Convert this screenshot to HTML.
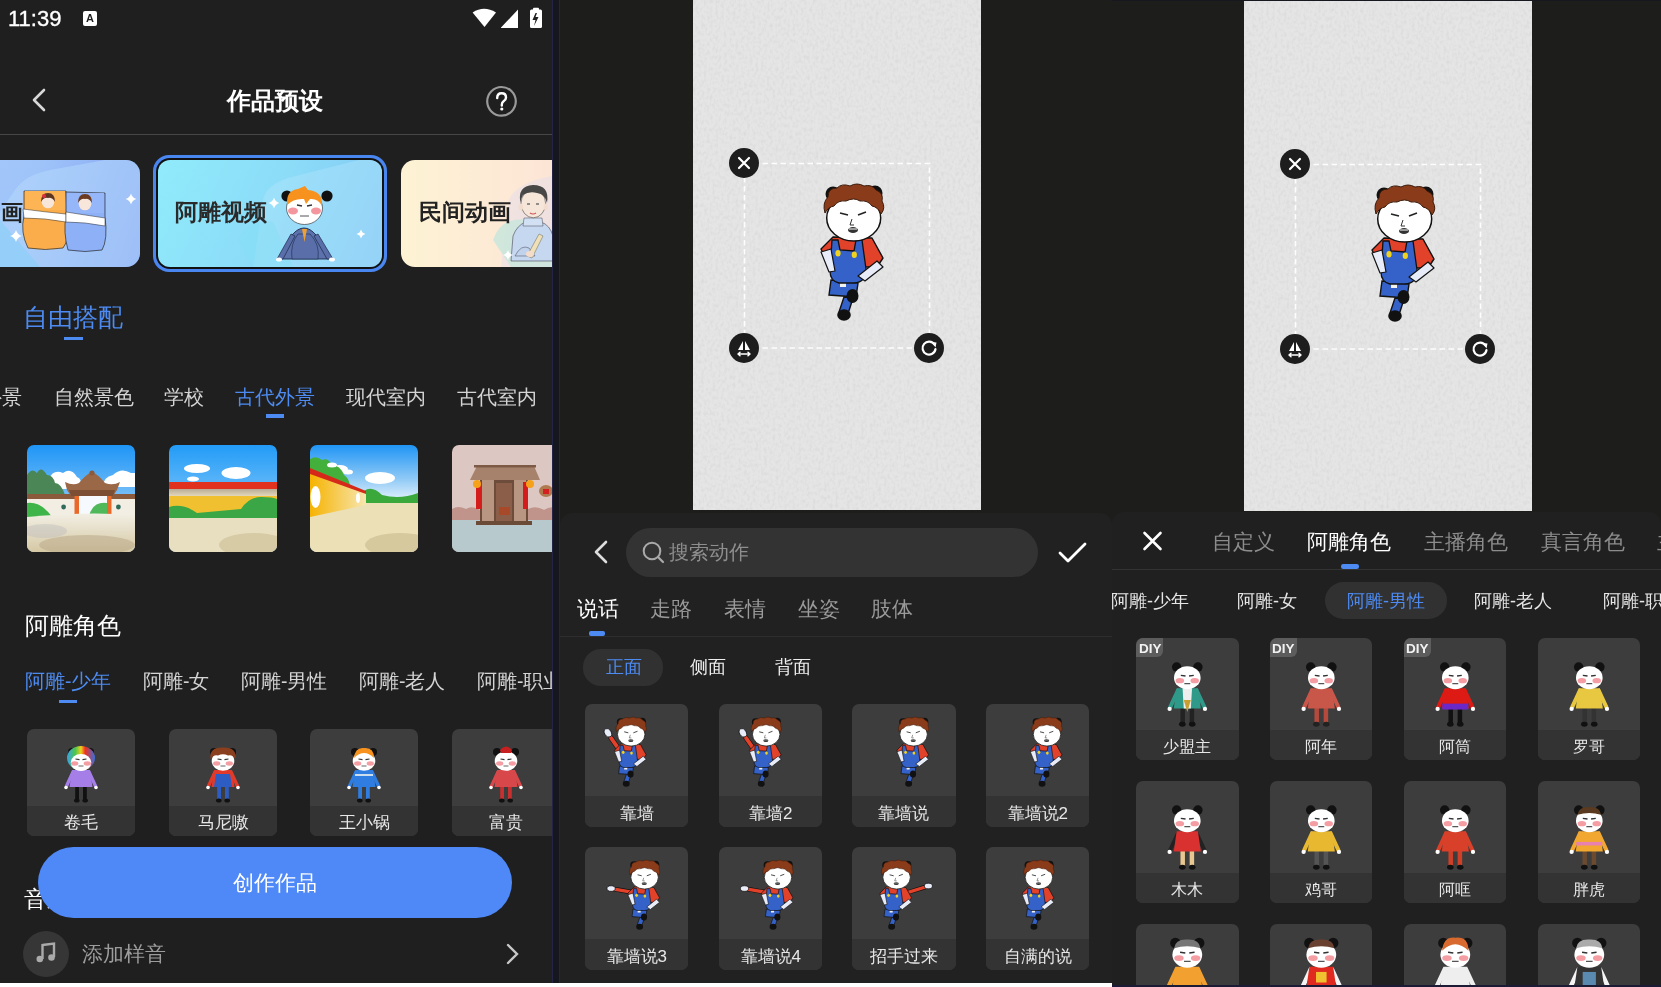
<!DOCTYPE html>
<html><head><meta charset="utf-8">
<style>
*{margin:0;padding:0;box-sizing:border-box}
html,body{width:1661px;height:987px;overflow:hidden;background:#ffffff;font-family:"Liberation Sans",sans-serif}
.a{position:absolute}
.t{position:absolute;white-space:nowrap;line-height:1;will-change:transform}
.pn{position:absolute;top:0;overflow:hidden}
svg{position:absolute;overflow:visible}
</style></head><body>

<div class="pn" style="left:0;width:552px;height:983px;background:#1f1f1f"><div class="t" style="left:8px;top:8px;font-size:22px;color:#fff;font-weight:normal;-webkit-text-stroke:0.35px #fff">11:39</div>
<div class="a" style="left:83px;top:11px;width:14px;height:15px;background:#fff;border-radius:2px;"></div>
<div class="t" style="left:85.5px;top:13px;font-size:11px;color:#1f1f1f;font-weight:bold;">A</div>
<svg style="left:470px;top:6px" width="76" height="24" viewBox="0 0 76 24">
<path d="M2.6 6.5 Q14 -1 26 6.5 L14.5 21 Z" fill="#fff"/>
<path d="M31 21.5 L48 3.6 L48 22 L31 22 Z" fill="#fff"/>
<rect x="60" y="3.5" width="12" height="18.5" rx="1.5" fill="#fff"/>
<rect x="63" y="1.8" width="6" height="3" rx="1" fill="#fff"/>
<path d="M65.5 7 L62.5 14 L65.5 14 L64 20 L68.5 11 L65.5 11 L67 7 Z" fill="#1f1f1f"/>
</svg>
<svg style="left:30px;top:87px" width="18" height="26" viewBox="0 0 18 26"><path d="M14 3 L4 13 L14 23" stroke="#d8d8d8" stroke-width="2.6" fill="none" stroke-linecap="round" stroke-linejoin="round"/></svg>
<div class="t" style="left:227px;top:89px;font-size:24.2px;color:#fff;font-weight:bold;">作品预设</div>
<svg style="left:484px;top:84px" width="35" height="35" viewBox="0 0 35 35"><circle cx="17.5" cy="17.3" r="14.3" stroke="#9a9a9a" stroke-width="2.2" fill="none"/><path d="M13.2 14 Q13.2 9.3 17.6 9.3 Q22 9.3 22 13.4 Q22 15.8 19.6 17.3 Q17.8 18.6 17.8 20.8 L17.8 21.6" stroke="#fff" stroke-width="2.4" fill="none" stroke-linecap="round"/><circle cx="17.8" cy="25" r="1.6" fill="#fff"/></svg>
<div class="a" style="left:0px;top:134px;width:552px;height:1px;background:#464646;border-radius:0px;"></div>
<div class="a" style="left:-100px;top:160px;width:240px;height:107px;border-radius:14px;background:linear-gradient(110deg,#a9cafb 0%,#9fc4f9 50%,#819ff2 100%);overflow:hidden">
<svg style="left:0;top:0" width="240" height="107" viewBox="0 0 240 107">
<path d="M60 110 L115 30 Q125 15 150 10 L260 -10 L260 110 Z" fill="#b4d8fc" opacity="0.55"/>
<path d="M40 70 Q60 45 100 60 L140 107 L60 107 Z" fill="#7fd0f8" opacity="0.5"/>
<path d="M124 31 L166 31 L167 56 Q170 80 163 88 Q145 91 128 88 Q120 72 124 56 Z" fill="#fbad4c" stroke="#2a2a2a" stroke-width="0.7"/>
<path d="M166 32 L205 33 L205 56 Q208 80 202 90 Q185 93 168 90 Q163 72 166 56 Z" fill="#8db0f7" stroke="#2a2a2a" stroke-width="0.7"/>
<path d="M125 31 L165 31 L165 50 L125 50 Z" fill="#fcb455"/><path d="M167 33 L204 33 L204 53 L167 53 Z" fill="#95b6f8"/>
<circle cx="148" cy="42" r="6.3" fill="#f8e6da"/><path d="M141 42 Q141 33 148 33 Q155 33 155 42 Q152 37 148 38 Q144 37 141 42 Z" fill="#5e3520"/><circle cx="144" cy="36" r="2" fill="#e03040"/>
<circle cx="185" cy="44" r="6.3" fill="#f8e6da"/><path d="M178 43 Q178 34 185 34 Q192 34 192 43 Q189 38 185 39 Q181 38 178 43 Z" fill="#6b3a1f"/>
<path d="M123 49 Q145 52 166 54 L166 62 Q145 58 124 58 Z" fill="#fff" stroke="#2a2a2a" stroke-width="0.5"/>
<path d="M166 52 Q185 55 205 58 L205 66 Q185 62 166 62 Z" fill="#fff" stroke="#2a2a2a" stroke-width="0.5"/>
<path d="M231 33.5 Q232.21 37.79 236.5 39 Q232.21 40.21 231 44.5 Q229.79 40.21 225.5 39 Q229.79 37.79 231 33.5 Z" fill="#fff"/>
<path d="M116 70 Q117.32 74.68 122 76 Q117.32 77.32 116 82 Q114.68 77.32 110 76 Q114.68 74.68 116 70 Z" fill="#fff"/>
</svg>
<div class="t" style="left:100px;top:42px;font-size:22px;color:#222;font-weight:bold;letter-spacing:0.5px;left:78px">动画</div>
</div>
<div class="a" style="left:153px;top:155px;width:234px;height:117px;background:#4a86f0;border-radius:16px;"></div>
<div class="a" style="left:156px;top:158px;width:228px;height:111px;background:#111;border-radius:14px;"></div>
<div class="a" style="left:158px;top:160px;width:224px;height:107px;border-radius:12px;background:linear-gradient(115deg,#90ebfb 0%,#8cdcf8 50%,#7fc3f4 100%);overflow:hidden">
<svg style="left:0;top:0" width="224" height="107" viewBox="0 0 224 107">
<path d="M95 110 L105 40 Q108 25 130 18 L240 -10 L240 110 Z" fill="#b0e4fb" opacity="0.45"/>
<path d="M80 80 Q90 60 115 62 L135 107 L95 107 Z" fill="#86e0f6" opacity="0.5"/>
<path d="M122 99 L134 75 Q140 68 146 68 Q152 68 158 75 L172 99 Z" fill="#5d72ad" stroke="#1d2a4a" stroke-width="0.9"/>
<path d="M134 99 Q132 84 140 74 L152 74 Q162 84 160 99 Z" fill="#5a6fa9" stroke="#1d2a4a" stroke-width="0.6"/>
<path d="M119 99 L133 74 L137 76 L125 99 Z" fill="#5a6fa9" stroke="#1d2a4a" stroke-width="0.7"/><path d="M175 99 L160 74 L156 76 L169 99 Z" fill="#5a6fa9" stroke="#1d2a4a" stroke-width="0.7"/>
<path d="M144 69 L146.5 82 L149 69 Z" fill="#f0a030"/>
<ellipse cx="121" cy="99.5" rx="3" ry="2" fill="#fff"/><ellipse cx="174" cy="99.5" rx="3" ry="2" fill="#fff"/>
<circle cx="129" cy="36" r="5.6" fill="#111"/><circle cx="169" cy="36" r="5.6" fill="#111"/>
<ellipse cx="146.5" cy="48" rx="18" ry="16.5" fill="#fff" stroke="#222" stroke-width="0.6"/>
<path d="M129 45 Q128 30 140 29 L147 26 L150 30 Q165 31 164 46 Q160 38 152 39 L148 44 L146 39 Q136 38 129 45 Z" fill="#f7921e"/>
<ellipse cx="135" cy="51" rx="5" ry="3.4" fill="#f07c84" opacity="0.8"/><ellipse cx="158" cy="51" rx="5" ry="3.4" fill="#f07c84" opacity="0.8"/>
<path d="M139 45 L144 46 M149 46 L154 45" stroke="#333" stroke-width="1.4"/><path d="M142 56 L151 56" stroke="#555" stroke-width="1"/>
<path d="M116 37.5 Q117.21 41.79 121.5 43 Q117.21 44.21 116 48.5 Q114.79 44.21 110.5 43 Q114.79 41.79 116 37.5 Z" fill="#fff"/>
<path d="M203 69.5 Q203.99 73.01 207.5 74 Q203.99 74.99 203 78.5 Q202.01 74.99 198.5 74 Q202.01 73.01 203 69.5 Z" fill="#fff"/>
</svg>
<div class="t" style="left:16.5px;top:42px;font-size:22.5px;color:#2a2a2a;font-weight:bold;">阿雕视频</div>
</div>
<div class="a" style="left:401px;top:160px;width:250px;height:107px;border-radius:14px;background:linear-gradient(90deg,#fdf3d4 0%,#fde6d6 55%,#fadbd6 100%);overflow:hidden">
<svg style="left:0;top:0" width="250" height="107" viewBox="0 0 250 107">
<path d="M100 107 L108 40 Q112 28 135 20 L250 -10 L250 107 Z" fill="#e9dfe4" opacity="0.7"/>
<path d="M92 80 Q100 55 130 60 L160 107 L110 107 Z" fill="#c7e6dc" opacity="0.8"/>
<path d="M110 101 L112 76 Q116 65 125 62 L140 62 Q149 65 152 76 L156 101 Z" fill="#c6d7f0" stroke="#445" stroke-width="0.6"/>
<path d="M123 58 L141 58 L142 66 L122 66 Z" fill="#d2e0f4" stroke="#445" stroke-width="0.5"/>
<path d="M114 96 Q120 84 128 88 L134 96 Z" fill="#c0d2ec" stroke="#445" stroke-width="0.5"/>
<path d="M126 96 L138 74 L142 76 L131 98 Z" fill="#efe0b8" stroke="#665" stroke-width="0.5"/>
<ellipse cx="129" cy="94" rx="4" ry="3" fill="#f4dccb"/>
<ellipse cx="132.3" cy="43.5" rx="12.3" ry="14.3" fill="#f6e6da" stroke="#444" stroke-width="0.6"/>
<ellipse cx="119.8" cy="47" rx="2.2" ry="3.2" fill="#f2dccd"/><ellipse cx="144.8" cy="47" rx="2.2" ry="3.2" fill="#f2dccd"/>
<path d="M119.5 43 Q116 26 132 25 Q149 25 146 43 Q144 34 136 33 Q128 31 122 35 Q120 38 119.5 43 Z" fill="#474747"/>
<path d="M126 44 L129 44 M135 44 L138 44" stroke="#333" stroke-width="1"/><path d="M129 53 Q132 55 135 53" stroke="#c55" stroke-width="1.2" fill="none"/>
<path d="M107 90 Q108.1 93.9 112 95 Q108.1 96.1 107 100 Q105.9 96.1 102 95 Q105.9 93.9 107 90 Z" fill="#fff"/>
</svg>
<div class="t" style="left:17.5px;top:42px;font-size:22.5px;color:#222;font-weight:bold;">民间动画</div>
</div>
<div class="t" style="left:23px;top:306px;font-size:24.5px;color:#4d8bf2;font-weight:normal;">自由搭配</div>
<div class="a" style="left:64px;top:337px;width:19px;height:3px;background:#4d8bf2;border-radius:0px;"></div>
<div class="t" style="left:-18px;top:388px;font-size:19.6px;color:#d4d4d4;font-weight:normal;">外景</div>
<div class="t" style="left:53.5px;top:388px;font-size:19.6px;color:#d4d4d4;font-weight:normal;">自然景色</div>
<div class="t" style="left:164px;top:388px;font-size:19.6px;color:#d4d4d4;font-weight:normal;">学校</div>
<div class="t" style="left:235px;top:388px;font-size:19.6px;color:#4d8bf2;font-weight:normal;">古代外景</div>
<div class="t" style="left:345.5px;top:388px;font-size:19.6px;color:#d4d4d4;font-weight:normal;">现代室内</div>
<div class="t" style="left:457px;top:388px;font-size:19.6px;color:#d4d4d4;font-weight:normal;">古代室内</div>
<div class="a" style="left:266px;top:414px;width:18px;height:4px;background:#4d8bf2;border-radius:0px;"></div>
<div class="a" style="left:27px;top:445px;width:108px;height:107px;border-radius:7px;overflow:hidden"><svg style="left:0;top:0" width="108" height="107" viewBox="0 0 108 107"><defs><linearGradient id="sky1" x1="0" y1="0" x2="0" y2="1"><stop offset="0" stop-color="#1e95f6"/><stop offset="0.6" stop-color="#8cc8f8"/><stop offset="1" stop-color="#e2f1fc"/></linearGradient><linearGradient id="gr1" x1="0" y1="0" x2="0" y2="1"><stop offset="0" stop-color="#f2efe4"/><stop offset="1" stop-color="#d5c8a4"/></linearGradient></defs><rect width="108" height="107" fill="url(#sky1)"/><path d="M12 44 Q12 34 22 34 Q26 24 36 28 Q44 22 50 32 Q56 34 53 44 Z" fill="#fff"/><path d="M76 42 Q76 32 86 30 Q94 22 104 28 L108 28 L108 42 Z" fill="#fff"/><path d="M0 30 Q5 22 10 28 Q14 20 20 30 Q26 30 28 38 Q34 38 38 50 L0 50 Z" fill="#4a8656"/><rect x="0" y="49" width="108" height="5" fill="#8b5a3c"/><path d="M0 54 L108 54 L108 72 Q60 66 0 74 Z" fill="#f2eee4"/><circle cx="36.6" cy="62" r="2.4" fill="#2f6a5a"/><circle cx="91.4" cy="62" r="2.4" fill="#2f6a5a"/><path d="M38 37 Q46 41 52 38 Q58 30 65 27 Q72 30 78 38 Q86 41 93 37 L90 45 L86 51 L44 51 L40 45 Z" fill="#9a6846"/><circle cx="65" cy="28" r="2.6" fill="#8b5a3c"/><path d="M42 45 L88 45 L86 51 L44 51 Z" fill="#7c4f34"/><rect x="52" y="51" width="28" height="20" fill="#f6faff"/><rect x="47.5" y="51" width="4.5" height="20" fill="#e8692a"/><rect x="80" y="51" width="4.5" height="20" fill="#e8692a"/><path d="M62 71 Q66 56 80 58 L80 71 Z" fill="#4fb85a"/><path d="M0 58 Q14 56 26 73 L0 75 Z" fill="#3fb448"/><path d="M0 72 Q60 66 108 70 L108 107 L0 107 Z" fill="url(#gr1)"/><ellipse cx="60" cy="100" rx="48" ry="10" fill="#b9a988" opacity="0.55"/><ellipse cx="18" cy="86" rx="22" ry="7" fill="#bdbdbd" opacity="0.45"/></svg></div>
<div class="a" style="left:169px;top:445px;width:108px;height:107px;border-radius:7px;overflow:hidden"><svg style="left:0;top:0" width="108" height="107" viewBox="0 0 108 107"><defs><linearGradient id="sky2" x1="0" y1="0" x2="0" y2="1"><stop offset="0" stop-color="#229bf7"/><stop offset="1" stop-color="#bfe3fb"/></linearGradient><linearGradient id="wb2" x1="0" y1="0" x2="0" y2="1"><stop offset="0" stop-color="#b8ad96"/><stop offset="1" stop-color="#e8dcc0"/></linearGradient></defs><rect width="108" height="107" fill="url(#sky2)"/><ellipse cx="28" cy="23.5" rx="13" ry="4.5" fill="#fff"/><ellipse cx="67" cy="28" rx="14.5" ry="6" fill="#fff"/><ellipse cx="24" cy="34" rx="6" ry="2.6" fill="#fff"/><rect x="0" y="37" width="108" height="7" fill="#e0321e"/><rect x="0" y="44" width="108" height="8" fill="url(#wb2)"/><rect x="0" y="51" width="108" height="22" fill="#f0c030"/><path d="M0 62 Q14 58 28 68 Q50 66 72 64 Q80 52 92 52 Q104 52 108 54 L108 74 L0 74 Z" fill="#3aa646"/><rect x="0" y="73" width="108" height="34" fill="#e8dfc0"/><ellipse cx="85" cy="100" rx="35" ry="12" fill="#c9b98e" opacity="0.55"/></svg></div>
<div class="a" style="left:310px;top:445px;width:108px;height:107px;border-radius:7px;overflow:hidden"><svg style="left:0;top:0" width="108" height="107" viewBox="0 0 108 107"><defs><linearGradient id="sky3" x1="0" y1="0" x2="0" y2="60" gradientUnits="userSpaceOnUse"><stop offset="0" stop-color="#1f95f5"/><stop offset="0.55" stop-color="#8cc8f6"/><stop offset="1" stop-color="#f4fafd"/></linearGradient><linearGradient id="wl3" x1="0" y1="0" x2="1" y2="0"><stop offset="0" stop-color="#f6b300"/><stop offset="1" stop-color="#f7e6b0"/></linearGradient></defs><rect width="108" height="107" fill="url(#sky3)"/><ellipse cx="70" cy="33" rx="15" ry="6" fill="#fff"/><ellipse cx="30" cy="24" rx="8" ry="4" fill="#fff"/><path d="M0 14 Q6 10 12 15 Q18 12 22 20 Q30 20 34 30 Q38 32 40 40 L0 30 Z" fill="#44b03c"/><ellipse cx="22" cy="20" rx="5" ry="2.5" fill="#fff"/><ellipse cx="38" cy="27" rx="5" ry="2.5" fill="#fff"/><path d="M54 46 Q62 40 72 50 Q90 55 108 48 L108 62 L54 62 Z" fill="#3aa83a"/><rect x="0" y="58" width="108" height="49" fill="#ebe0b6"/><path d="M0 27 L56 47 L56 60 L0 72 Z" fill="url(#wl3)"/><path d="M0 23 L56 46 L56 49 L0 29 Z" fill="#d52a1a"/><ellipse cx="5.5" cy="52" rx="5" ry="11" fill="#fff"/><ellipse cx="48" cy="53" rx="2" ry="5" fill="#fff"/><ellipse cx="90" cy="100" rx="35" ry="12" fill="#c9b98e" opacity="0.6"/></svg></div>
<div class="a" style="left:452px;top:445px;width:108px;height:107px;border-radius:7px;overflow:hidden"><svg style="left:0;top:0" width="108" height="107" viewBox="0 0 108 107"><rect width="108" height="107" fill="#dcc7c3"/><path d="M0 64 Q6 60 14 64 Q20 60 28 65 L28 76 L0 76 Z" fill="#b07a6c" opacity="0.65"/><path d="M76 64 Q84 60 92 65 Q100 60 108 64 L108 76 L76 76 Z" fill="#b07a6c" opacity="0.65"/><rect x="0" y="75" width="108" height="32" fill="#b8c9cd"/><rect x="28" y="32" width="48" height="44" fill="#6e4c3c"/><rect x="44" y="38" width="16" height="38" fill="#8a5e48"/><rect x="30" y="35" width="12" height="41" fill="#b89682"/><rect x="62" y="35" width="12" height="41" fill="#b89682"/><path d="M47 62 L58 62 L58 70 L47 70 Z" fill="#a84a2a"/><path d="M18 35 L25 21 L82 21 L88 35 Z" fill="#a6826c"/><rect x="22" y="20" width="62" height="2.5" fill="#7d5a45"/><rect x="24" y="37" width="5" height="27" fill="#d41c1c"/><rect x="71" y="37" width="5" height="27" fill="#d41c1c"/><circle cx="25" cy="39" r="4" fill="#f5a11a"/><circle cx="78" cy="39" r="4" fill="#f5a11a"/><ellipse cx="94" cy="46" rx="7" ry="6" fill="#b07a50"/><rect x="91" y="44" width="6" height="5" fill="#d42020"/><rect x="24" y="76" width="56" height="4" fill="#6b4a38"/></svg></div>
<div class="t" style="left:25px;top:614px;font-size:24px;color:#fff;font-weight:normal;">阿雕角色</div>
<div class="t" style="left:25px;top:672px;font-size:19.5px;color:#4d8bf2;font-weight:normal;">阿雕-少年</div>
<div class="t" style="left:143px;top:672px;font-size:19.5px;color:#d4d4d4;font-weight:normal;">阿雕-女</div>
<div class="t" style="left:241px;top:672px;font-size:19.5px;color:#d4d4d4;font-weight:normal;">阿雕-男性</div>
<div class="t" style="left:359px;top:672px;font-size:19.5px;color:#d4d4d4;font-weight:normal;">阿雕-老人</div>
<div class="t" style="left:477px;top:672px;font-size:19.5px;color:#d4d4d4;font-weight:normal;">阿雕-职业</div>
<div class="a" style="left:59px;top:699.5px;width:18px;height:3.5px;background:#4d8bf2;border-radius:0px;"></div>
<div class="a" style="left:27px;top:729px;width:108px;height:107px;border-radius:7px;background:#3d3d3d;overflow:hidden"><div class="a" style="left:0;top:77px;width:108px;height:30px;background:#333"></div><svg style="left:0;top:0" width="108" height="107" viewBox="0 0 108 107"><defs><linearGradient id="rainbow" x1="0" y1="0" x2="1" y2="0"><stop offset="0" stop-color="#3aa0e8"/><stop offset="0.3" stop-color="#4cc84a"/><stop offset="0.5" stop-color="#f0d020"/><stop offset="0.65" stop-color="#f03020"/><stop offset="1" stop-color="#3a70e0"/></linearGradient></defs><g transform="translate(54.00,17.00) scale(1)"><rect x="-5.8" y="39" width="3.8" height="15" fill="#111"/><rect x="2" y="39" width="3.8" height="15" fill="#111"/><ellipse cx="-4.2" cy="54.5" rx="2.8" ry="2.1" fill="#111"/><ellipse cx="4.2" cy="54.5" rx="2.8" ry="2.1" fill="#111"/><path d="M-8 26 L-14.5 40" stroke="#a57ee8" stroke-width="3.4" stroke-linecap="round"/><path d="M8 26 L14.5 40" stroke="#a57ee8" stroke-width="3.4" stroke-linecap="round"/><circle cx="-15" cy="41.5" r="1.8" fill="#fff"/><circle cx="15" cy="41.5" r="1.8" fill="#fff"/><path d="M-9 24 L9 24 L11.5 41 L-11.5 41 Z" fill="#a57ee8"/><circle cx="-9" cy="6" r="4" fill="#111"/><circle cx="9" cy="6" r="4" fill="#111"/><ellipse cx="0" cy="15" rx="11.3" ry="9.8" fill="#fff"/><ellipse cx="0" cy="12" rx="14" ry="12" fill="url(#rainbow)"/><ellipse cx="0" cy="16.5" rx="10.3" ry="8.5" fill="#fff"/><ellipse cx="-6.3" cy="17.5" rx="3.6" ry="2.2" fill="#f07c84" opacity="0.75"/><ellipse cx="6.3" cy="17.5" rx="3.6" ry="2.2" fill="#f07c84" opacity="0.75"/><path d="M-5.5 13 L-1.5 13.6 M1.5 13.6 L5.5 13" stroke="#333" stroke-width="1.2"/><path d="M-2.5 20 L2.5 20" stroke="#555" stroke-width="0.9"/></g></svg><div class="t" style="left:0;width:108px;text-align:center;top:84.5px;font-size:17px;color:#e8e8e8">卷毛</div></div>
<div class="a" style="left:169px;top:729px;width:108px;height:107px;border-radius:7px;background:#3d3d3d;overflow:hidden"><div class="a" style="left:0;top:77px;width:108px;height:30px;background:#333"></div><svg style="left:0;top:0" width="108" height="107" viewBox="0 0 108 107"><g transform="translate(54.00,17.00) scale(1)"><rect x="-5.8" y="39" width="3.8" height="15" fill="#2d5cc2"/><rect x="2" y="39" width="3.8" height="15" fill="#2d5cc2"/><ellipse cx="-4.2" cy="54.5" rx="2.8" ry="2.1" fill="#111"/><ellipse cx="4.2" cy="54.5" rx="2.8" ry="2.1" fill="#111"/><path d="M-8 26 L-14.5 40" stroke="#e23a2a" stroke-width="3.4" stroke-linecap="round"/><path d="M8 26 L14.5 40" stroke="#e23a2a" stroke-width="3.4" stroke-linecap="round"/><circle cx="-15" cy="41.5" r="1.8" fill="#fff"/><circle cx="15" cy="41.5" r="1.8" fill="#fff"/><path d="M-9 24 L9 24 L11.5 41 L-11.5 41 Z" fill="#e23a2a"/><path d="M-7 28 L7 28 L9 41 L-9 41 Z" fill="#2d5cc2"/><circle cx="-9" cy="6" r="4" fill="#111"/><circle cx="9" cy="6" r="4" fill="#111"/><ellipse cx="0" cy="15" rx="11.3" ry="9.8" fill="#fff"/><path d="M-12.5 13 Q-14 1 0 1.5 Q14 1 12.5 13 Q9 8 5 9.5 Q0 7 -5 9.5 Q-9 8 -12.5 13 Z" fill="#8a3f1e"/><ellipse cx="-6.3" cy="17.5" rx="3.6" ry="2.2" fill="#f07c84" opacity="0.75"/><ellipse cx="6.3" cy="17.5" rx="3.6" ry="2.2" fill="#f07c84" opacity="0.75"/><path d="M-5.5 13 L-1.5 13.6 M1.5 13.6 L5.5 13" stroke="#333" stroke-width="1.2"/><path d="M-2.5 20 L2.5 20" stroke="#555" stroke-width="0.9"/></g></svg><div class="t" style="left:0;width:108px;text-align:center;top:84.5px;font-size:17px;color:#e8e8e8">马尼嗷</div></div>
<div class="a" style="left:310px;top:729px;width:108px;height:107px;border-radius:7px;background:#3d3d3d;overflow:hidden"><div class="a" style="left:0;top:77px;width:108px;height:30px;background:#333"></div><svg style="left:0;top:0" width="108" height="107" viewBox="0 0 108 107"><g transform="translate(54.00,17.00) scale(1)"><rect x="-5.8" y="39" width="3.8" height="15" fill="#2f7de0"/><rect x="2" y="39" width="3.8" height="15" fill="#2f7de0"/><ellipse cx="-4.2" cy="54.5" rx="2.8" ry="2.1" fill="#111"/><ellipse cx="4.2" cy="54.5" rx="2.8" ry="2.1" fill="#111"/><path d="M-8 26 L-14.5 40" stroke="#2f7de0" stroke-width="3.4" stroke-linecap="round"/><path d="M8 26 L14.5 40" stroke="#2f7de0" stroke-width="3.4" stroke-linecap="round"/><circle cx="-15" cy="41.5" r="1.8" fill="#fff"/><circle cx="15" cy="41.5" r="1.8" fill="#fff"/><path d="M-9 24 L9 24 L11.5 41 L-11.5 41 Z" fill="#2f7de0"/><rect x="-9" y="28" width="18" height="2" fill="#cde"/><circle cx="-9" cy="6" r="4" fill="#111"/><circle cx="9" cy="6" r="4" fill="#111"/><ellipse cx="0" cy="15" rx="11.3" ry="9.8" fill="#fff"/><path d="M-10 12 Q-9 1 0 2 Q10 1 10 12 Q5 7 0 7 Q-5 7 -10 12 Z" fill="#f7921e"/><ellipse cx="-6.3" cy="17.5" rx="3.6" ry="2.2" fill="#f07c84" opacity="0.75"/><ellipse cx="6.3" cy="17.5" rx="3.6" ry="2.2" fill="#f07c84" opacity="0.75"/><path d="M-5.5 13 L-1.5 13.6 M1.5 13.6 L5.5 13" stroke="#333" stroke-width="1.2"/><path d="M-2.5 20 L2.5 20" stroke="#555" stroke-width="0.9"/></g></svg><div class="t" style="left:0;width:108px;text-align:center;top:84.5px;font-size:17px;color:#e8e8e8">王小锅</div></div>
<div class="a" style="left:452px;top:729px;width:108px;height:107px;border-radius:7px;background:#3d3d3d;overflow:hidden"><div class="a" style="left:0;top:77px;width:108px;height:30px;background:#333"></div><svg style="left:0;top:0" width="108" height="107" viewBox="0 0 108 107"><g transform="translate(54.00,17.00) scale(1)"><rect x="-5.8" y="39" width="3.8" height="15" fill="#c83030"/><rect x="2" y="39" width="3.8" height="15" fill="#c83030"/><ellipse cx="-4.2" cy="54.5" rx="2.8" ry="2.1" fill="#111"/><ellipse cx="4.2" cy="54.5" rx="2.8" ry="2.1" fill="#111"/><path d="M-8 26 L-14.5 40" stroke="#d8484a" stroke-width="3.4" stroke-linecap="round"/><path d="M8 26 L14.5 40" stroke="#d8484a" stroke-width="3.4" stroke-linecap="round"/><circle cx="-15" cy="41.5" r="1.8" fill="#fff"/><circle cx="15" cy="41.5" r="1.8" fill="#fff"/><path d="M-9 24 L9 24 L11.5 41 L-11.5 41 Z" fill="#d8484a"/><circle cx="-9" cy="6" r="4" fill="#111"/><circle cx="9" cy="6" r="4" fill="#111"/><ellipse cx="0" cy="15" rx="11.3" ry="9.8" fill="#fff"/><path d="M-6 4 Q0 -3 6 4 L5 7 L-5 7 Z" fill="#c82020"/><ellipse cx="-6.3" cy="17.5" rx="3.6" ry="2.2" fill="#f07c84" opacity="0.75"/><ellipse cx="6.3" cy="17.5" rx="3.6" ry="2.2" fill="#f07c84" opacity="0.75"/><path d="M-5.5 13 L-1.5 13.6 M1.5 13.6 L5.5 13" stroke="#333" stroke-width="1.2"/><path d="M-2.5 20 L2.5 20" stroke="#555" stroke-width="0.9"/></g></svg><div class="t" style="left:0;width:108px;text-align:center;top:84.5px;font-size:17px;color:#e8e8e8">富贵</div></div>
<div class="t" style="left:24px;top:889px;font-size:22.5px;color:#fff;font-weight:500;">音乐</div>
<div class="a" style="left:38px;top:847px;width:474px;height:71px;background:#4f89f7;border-radius:36px;"></div>
<div class="t" style="left:232.5px;top:872px;font-size:21.2px;color:#fff;font-weight:normal;">创作作品</div>
<div class="a" style="left:23px;top:931px;width:46px;height:46px;background:#363636;border-radius:23px;"></div>
<svg style="left:23px;top:931px" width="46" height="46" viewBox="0 0 46 46"><path d="M19.5 14 L31 12.5 L31 26" stroke="#aaa" stroke-width="2.4" fill="none"/><rect x="18.3" y="13" width="2.4" height="15" fill="#aaa"/><circle cx="16.8" cy="28" r="3.3" fill="#aaa"/><circle cx="28.5" cy="26.5" r="3.3" fill="#aaa"/></svg>
<div class="t" style="left:82px;top:943px;font-size:21px;color:#9c9c9c;font-weight:normal;">添加样音</div>
<svg style="left:503px;top:942px" width="20" height="24" viewBox="0 0 20 24"><path d="M5 3 L14 12 L5 21" stroke="#c8c8c8" stroke-width="2.4" fill="none" stroke-linecap="round"/></svg></div>
<div class="a" style="left:552px;top:0;width:8px;height:983px;background:#16161e;border-left:1px solid #242446;border-right:1px solid #242446"></div>
<div class="pn" style="left:560px;width:552px;height:983px;background:#1d1e1c"><svg style="left:133px;top:0px" width="288" height="510" viewBox="0 0 288 510"><defs><filter id="n2" x="0" y="0" width="100%" height="100%"><feTurbulence type="fractalNoise" baseFrequency="0.35 0.25" numOctaves="2" seed="4"/><feColorMatrix type="matrix" values="0 0 0 0 0  0 0 0 0 0  0 0 0 0 0  0 0 0 -0.9 0.55"/></filter></defs><rect width="288" height="510" fill="#e5e5e5"/><rect width="288" height="510" fill="#000" filter="url(#n2)" opacity="0.09"/></svg>
<svg style="left:184.3px;top:163px" width="186" height="186" viewBox="0 0 186 186"><rect x="0.5" y="0.5" width="185" height="184.5" fill="none" stroke="#fdfdfd" stroke-width="1.6" stroke-dasharray="5.5 3.5"/></svg>
<svg style="left:184.3px;top:163px" width="185" height="185" viewBox="0 0 185 185"><path d="M100 134 L109 135 L104 151 L95 149 Z" fill="#3462c8" stroke="#111" stroke-width="1.4"/><ellipse cx="100" cy="152" rx="6.8" ry="5.8" fill="#111"/><path d="M87 117 L114 120 L112 134 L85 132 Z" fill="#3462c8" stroke="#111" stroke-width="1.4"/><rect x="96" y="119" width="6" height="5" fill="#f2f2f2"/><ellipse cx="108.5" cy="133" rx="6" ry="7" fill="#111"/><path d="M77 86 L89 74 L128 75 L139 95 L133 104 L86 104 Z" fill="#e2412a" stroke="#111" stroke-width="1.4" stroke-linejoin="round"/><path d="M88 77 L94 77 L96 87 L110 88 L112 77 L118 77 L122 106 Q123 119 110 120 L95 120 Q86 118 86 108 Z" fill="#3462c8" stroke="#111" stroke-width="1.3"/><ellipse cx="94" cy="90.3" rx="2.6" ry="3.2" fill="#f1d31c"/><ellipse cx="110.3" cy="91.8" rx="2.6" ry="3.2" fill="#f1d31c"/><path d="M77 89 L87 86 L91 108 L85 109 Z" fill="#e8ecf8" stroke="#111" stroke-width="1.2" stroke-linejoin="round"/><path d="M133 98 L139 104 L121 118 L114 113 Z" fill="#e8ecf8" stroke="#111" stroke-width="1.2" stroke-linejoin="round"/><circle cx="89" cy="31" r="7.5" fill="#111"/><circle cx="131" cy="30" r="7.5" fill="#111"/><ellipse cx="109.7" cy="55" rx="27" ry="23" fill="#fff" stroke="#111" stroke-width="1.5"/><path d="M81 50 Q78 40 84 34 Q84 25 93 25 Q98 20 106 23 Q113 19 120 23 Q128 21 132 27 Q140 30 138 38 Q142 45 137 51 Q134 44 128 43 Q124 37 116 38 Q110 34 102 38 Q94 37 90 43 Q84 44 81 50 Z" fill="#8a3b1a" stroke="#3a1a0a" stroke-width="1"/><path d="M96 50 L104 52 M114 52 L122 49" stroke="#222" stroke-width="1.6"/><path d="M108 56 L106 62 L110 62" stroke="#333" stroke-width="1" fill="none"/><ellipse cx="109" cy="67" rx="5" ry="3" fill="#333"/><path d="M105 66 L113 66" stroke="#fff" stroke-width="1"/></svg>
<svg style="left:169.3px;top:148px" width="30" height="30" viewBox="0 0 30 30"><circle cx="15" cy="15" r="15" fill="#1d1d1d"/><path d="M10 10 L20 20 M20 10 L10 20" stroke="#fff" stroke-width="2.2" stroke-linecap="round"/></svg>
<svg style="left:169.3px;top:332.5px" width="30" height="30" viewBox="0 0 30 30"><circle cx="15" cy="15" r="15" fill="#1d1d1d"/><path d="M14 8 L14 17 L9 17 Z M16 8 L16 17 L21 17 Z" fill="#fff"/><path d="M9 21 L21 21 M9 21 L11 19.2 M9 21 L11 22.8 M21 21 L19 19.2 M21 21 L19 22.8" stroke="#fff" stroke-width="1.5" stroke-linecap="round"/></svg>
<svg style="left:354.3px;top:332.5px" width="30" height="30" viewBox="0 0 30 30"><circle cx="15" cy="15" r="15" fill="#1d1d1d"/><path d="M20.5 11.5 A6.5 6.5 0 1 0 21.5 16" stroke="#fff" stroke-width="2.2" fill="none" stroke-linecap="round"/><path d="M17.5 9 L22.5 9.5 L21.5 14.5 Z" fill="#fff"/></svg>
<div class="a" style="left:0;top:513px;width:552px;height:480px;background:#212121;border-radius:12px 12px 0 0"></div>
<svg style="left:30px;top:538px" width="22" height="28" viewBox="0 0 22 28"><path d="M16 4 L6 14 L16 24" stroke="#ddd" stroke-width="2.6" fill="none" stroke-linecap="round" stroke-linejoin="round"/></svg>
<div class="a" style="left:66px;top:528px;width:412px;height:49px;background:#333333;border-radius:24.5px;"></div>
<svg style="left:81px;top:540px" width="26" height="26" viewBox="0 0 26 26"><circle cx="11" cy="11" r="8.3" stroke="#aaa" stroke-width="2" fill="none"/><path d="M17 17 L22 22" stroke="#aaa" stroke-width="2.2" stroke-linecap="round"/></svg>
<div class="t" style="left:108.5px;top:543px;font-size:19.8px;color:#8e8e8e;font-weight:normal;">搜索动作</div>
<svg style="left:496px;top:540px" width="34" height="26" viewBox="0 0 34 26"><path d="M4 13 L12 21 L29 4" stroke="#fff" stroke-width="2.8" fill="none" stroke-linecap="round" stroke-linejoin="round"/></svg>
<div class="t" style="left:16.5px;top:598.5px;font-size:20.5px;color:#fff;font-weight:normal;">说话</div>
<div class="t" style="left:90px;top:598.5px;font-size:20.5px;color:#9a9a9a;font-weight:normal;">走路</div>
<div class="t" style="left:164px;top:598.5px;font-size:20.5px;color:#9a9a9a;font-weight:normal;">表情</div>
<div class="t" style="left:237.5px;top:598.5px;font-size:20.5px;color:#9a9a9a;font-weight:normal;">坐姿</div>
<div class="t" style="left:311px;top:598.5px;font-size:20.5px;color:#9a9a9a;font-weight:normal;">肢体</div>
<div class="a" style="left:28.7px;top:631px;width:16.5px;height:4.5px;background:#4d8bf2;border-radius:2px;"></div>
<div class="a" style="left:0px;top:636px;width:552px;height:1px;background:#2e2e2e;border-radius:0px;"></div>
<div class="a" style="left:23.3px;top:649.3px;width:79.5px;height:36.5px;background:#313131;border-radius:18px;"></div>
<div class="t" style="left:46px;top:658.5px;font-size:17.5px;color:#4d8bf2;font-weight:normal;">正面</div>
<div class="t" style="left:130px;top:658.5px;font-size:17.5px;color:#eee;font-weight:normal;">侧面</div>
<div class="t" style="left:215px;top:658.5px;font-size:17.5px;color:#eee;font-weight:normal;">背面</div>
<div class="a" style="left:24.7px;top:704.2px;width:103.5px;height:122.5px;border-radius:7px;background:#3d3d3d;overflow:hidden"><div class="a" style="left:0;top:92.0px;width:103.5px;height:30.5px;background:#333"></div><svg style="left:0;top:0" width="103.5" height="122.5" viewBox="0 0 103.5 122.5"><g transform="translate(-9.75,2.29) scale(0.51)"><path d="M84 82 L70 62" stroke="#111" stroke-width="10" stroke-linecap="round"/><path d="M84 82 L70 62" stroke="#e2412a" stroke-width="7.5" stroke-linecap="round"/><ellipse cx="64" cy="52" rx="6.5" ry="9" transform="rotate(-30 64 52)" fill="#e8ecf8" stroke="#111" stroke-width="1.5"/><path d="M100 134 L109 135 L104 151 L95 149 Z" fill="#3462c8" stroke="#111" stroke-width="1.4"/><ellipse cx="100" cy="152" rx="6.8" ry="5.8" fill="#111"/><path d="M87 117 L114 120 L112 134 L85 132 Z" fill="#3462c8" stroke="#111" stroke-width="1.4"/><rect x="96" y="119" width="6" height="5" fill="#f2f2f2"/><ellipse cx="108.5" cy="133" rx="6" ry="7" fill="#111"/><path d="M77 86 L89 74 L128 75 L139 95 L133 104 L86 104 Z" fill="#e2412a" stroke="#111" stroke-width="1.4" stroke-linejoin="round"/><path d="M88 77 L94 77 L96 87 L110 88 L112 77 L118 77 L122 106 Q123 119 110 120 L95 120 Q86 118 86 108 Z" fill="#3462c8" stroke="#111" stroke-width="1.3"/><ellipse cx="94" cy="90.3" rx="2.6" ry="3.2" fill="#f1d31c"/><ellipse cx="110.3" cy="91.8" rx="2.6" ry="3.2" fill="#f1d31c"/><path d="M77 89 L87 86 L91 108 L85 109 Z" fill="#e8ecf8" stroke="#111" stroke-width="1.2" stroke-linejoin="round"/><path d="M133 98 L139 104 L121 118 L114 113 Z" fill="#e8ecf8" stroke="#111" stroke-width="1.2" stroke-linejoin="round"/><circle cx="89" cy="31" r="7.5" fill="#111"/><circle cx="131" cy="30" r="7.5" fill="#111"/><ellipse cx="109.7" cy="55" rx="27" ry="23" fill="#fff" stroke="#111" stroke-width="1.5"/><path d="M81 50 Q78 40 84 34 Q84 25 93 25 Q98 20 106 23 Q113 19 120 23 Q128 21 132 27 Q140 30 138 38 Q142 45 137 51 Q134 44 128 43 Q124 37 116 38 Q110 34 102 38 Q94 37 90 43 Q84 44 81 50 Z" fill="#8a3b1a" stroke="#3a1a0a" stroke-width="1"/><path d="M96 50 L104 52 M114 52 L122 49" stroke="#222" stroke-width="1.6"/><path d="M108 56 L106 62 L110 62" stroke="#333" stroke-width="1" fill="none"/><ellipse cx="109" cy="67" rx="5" ry="3" fill="#333"/><path d="M105 66 L113 66" stroke="#fff" stroke-width="1"/></g></svg><div class="t" style="left:0;width:103.5px;text-align:center;top:100.5px;font-size:17px;color:#e8e8e8">靠墙</div></div>
<div class="a" style="left:158.5px;top:704.2px;width:103.5px;height:122.5px;border-radius:7px;background:#3d3d3d;overflow:hidden"><div class="a" style="left:0;top:92.0px;width:103.5px;height:30.5px;background:#333"></div><svg style="left:0;top:0" width="103.5" height="122.5" viewBox="0 0 103.5 122.5"><g transform="translate(-8.75,2.29) scale(0.51)"><path d="M84 82 L70 62" stroke="#111" stroke-width="10" stroke-linecap="round"/><path d="M84 82 L70 62" stroke="#e2412a" stroke-width="7.5" stroke-linecap="round"/><ellipse cx="64" cy="52" rx="6.5" ry="9" transform="rotate(-30 64 52)" fill="#e8ecf8" stroke="#111" stroke-width="1.5"/><path d="M100 134 L109 135 L104 151 L95 149 Z" fill="#3462c8" stroke="#111" stroke-width="1.4"/><ellipse cx="100" cy="152" rx="6.8" ry="5.8" fill="#111"/><path d="M87 117 L114 120 L112 134 L85 132 Z" fill="#3462c8" stroke="#111" stroke-width="1.4"/><rect x="96" y="119" width="6" height="5" fill="#f2f2f2"/><ellipse cx="108.5" cy="133" rx="6" ry="7" fill="#111"/><path d="M77 86 L89 74 L128 75 L139 95 L133 104 L86 104 Z" fill="#e2412a" stroke="#111" stroke-width="1.4" stroke-linejoin="round"/><path d="M88 77 L94 77 L96 87 L110 88 L112 77 L118 77 L122 106 Q123 119 110 120 L95 120 Q86 118 86 108 Z" fill="#3462c8" stroke="#111" stroke-width="1.3"/><ellipse cx="94" cy="90.3" rx="2.6" ry="3.2" fill="#f1d31c"/><ellipse cx="110.3" cy="91.8" rx="2.6" ry="3.2" fill="#f1d31c"/><path d="M77 89 L87 86 L91 108 L85 109 Z" fill="#e8ecf8" stroke="#111" stroke-width="1.2" stroke-linejoin="round"/><path d="M133 98 L139 104 L121 118 L114 113 Z" fill="#e8ecf8" stroke="#111" stroke-width="1.2" stroke-linejoin="round"/><circle cx="89" cy="31" r="7.5" fill="#111"/><circle cx="131" cy="30" r="7.5" fill="#111"/><ellipse cx="109.7" cy="55" rx="27" ry="23" fill="#fff" stroke="#111" stroke-width="1.5"/><path d="M81 50 Q78 40 84 34 Q84 25 93 25 Q98 20 106 23 Q113 19 120 23 Q128 21 132 27 Q140 30 138 38 Q142 45 137 51 Q134 44 128 43 Q124 37 116 38 Q110 34 102 38 Q94 37 90 43 Q84 44 81 50 Z" fill="#8a3b1a" stroke="#3a1a0a" stroke-width="1"/><path d="M96 50 L104 52 M114 52 L122 49" stroke="#222" stroke-width="1.6"/><path d="M108 56 L106 62 L110 62" stroke="#333" stroke-width="1" fill="none"/><ellipse cx="109" cy="67" rx="5" ry="3" fill="#333"/><path d="M105 66 L113 66" stroke="#fff" stroke-width="1"/></g></svg><div class="t" style="left:0;width:103.5px;text-align:center;top:100.5px;font-size:17px;color:#e8e8e8">靠墙2</div></div>
<div class="a" style="left:292.4px;top:704.2px;width:103.5px;height:122.5px;border-radius:7px;background:#3d3d3d;overflow:hidden"><div class="a" style="left:0;top:92.0px;width:103.5px;height:30.5px;background:#333"></div><svg style="left:0;top:0" width="103.5" height="122.5" viewBox="0 0 103.5 122.5"><g transform="translate(5.65,2.29) scale(0.51)"><path d="M100 134 L109 135 L104 151 L95 149 Z" fill="#3462c8" stroke="#111" stroke-width="1.4"/><ellipse cx="100" cy="152" rx="6.8" ry="5.8" fill="#111"/><path d="M87 117 L114 120 L112 134 L85 132 Z" fill="#3462c8" stroke="#111" stroke-width="1.4"/><rect x="96" y="119" width="6" height="5" fill="#f2f2f2"/><ellipse cx="108.5" cy="133" rx="6" ry="7" fill="#111"/><path d="M77 86 L89 74 L128 75 L139 95 L133 104 L86 104 Z" fill="#e2412a" stroke="#111" stroke-width="1.4" stroke-linejoin="round"/><path d="M88 77 L94 77 L96 87 L110 88 L112 77 L118 77 L122 106 Q123 119 110 120 L95 120 Q86 118 86 108 Z" fill="#3462c8" stroke="#111" stroke-width="1.3"/><ellipse cx="94" cy="90.3" rx="2.6" ry="3.2" fill="#f1d31c"/><ellipse cx="110.3" cy="91.8" rx="2.6" ry="3.2" fill="#f1d31c"/><path d="M77 89 L87 86 L91 108 L85 109 Z" fill="#e8ecf8" stroke="#111" stroke-width="1.2" stroke-linejoin="round"/><path d="M133 98 L139 104 L121 118 L114 113 Z" fill="#e8ecf8" stroke="#111" stroke-width="1.2" stroke-linejoin="round"/><circle cx="89" cy="31" r="7.5" fill="#111"/><circle cx="131" cy="30" r="7.5" fill="#111"/><ellipse cx="109.7" cy="55" rx="27" ry="23" fill="#fff" stroke="#111" stroke-width="1.5"/><path d="M81 50 Q78 40 84 34 Q84 25 93 25 Q98 20 106 23 Q113 19 120 23 Q128 21 132 27 Q140 30 138 38 Q142 45 137 51 Q134 44 128 43 Q124 37 116 38 Q110 34 102 38 Q94 37 90 43 Q84 44 81 50 Z" fill="#8a3b1a" stroke="#3a1a0a" stroke-width="1"/><path d="M96 50 L104 52 M114 52 L122 49" stroke="#222" stroke-width="1.6"/><path d="M108 56 L106 62 L110 62" stroke="#333" stroke-width="1" fill="none"/><ellipse cx="109" cy="67" rx="5" ry="3" fill="#333"/><path d="M105 66 L113 66" stroke="#fff" stroke-width="1"/></g></svg><div class="t" style="left:0;width:103.5px;text-align:center;top:100.5px;font-size:17px;color:#e8e8e8">靠墙说</div></div>
<div class="a" style="left:425.9px;top:704.2px;width:103.5px;height:122.5px;border-radius:7px;background:#3d3d3d;overflow:hidden"><div class="a" style="left:0;top:92.0px;width:103.5px;height:30.5px;background:#333"></div><svg style="left:0;top:0" width="103.5" height="122.5" viewBox="0 0 103.5 122.5"><g transform="translate(5.05,2.29) scale(0.51)"><path d="M100 134 L109 135 L104 151 L95 149 Z" fill="#3462c8" stroke="#111" stroke-width="1.4"/><ellipse cx="100" cy="152" rx="6.8" ry="5.8" fill="#111"/><path d="M87 117 L114 120 L112 134 L85 132 Z" fill="#3462c8" stroke="#111" stroke-width="1.4"/><rect x="96" y="119" width="6" height="5" fill="#f2f2f2"/><ellipse cx="108.5" cy="133" rx="6" ry="7" fill="#111"/><path d="M77 86 L89 74 L128 75 L139 95 L133 104 L86 104 Z" fill="#e2412a" stroke="#111" stroke-width="1.4" stroke-linejoin="round"/><path d="M88 77 L94 77 L96 87 L110 88 L112 77 L118 77 L122 106 Q123 119 110 120 L95 120 Q86 118 86 108 Z" fill="#3462c8" stroke="#111" stroke-width="1.3"/><ellipse cx="94" cy="90.3" rx="2.6" ry="3.2" fill="#f1d31c"/><ellipse cx="110.3" cy="91.8" rx="2.6" ry="3.2" fill="#f1d31c"/><path d="M77 89 L87 86 L91 108 L85 109 Z" fill="#e8ecf8" stroke="#111" stroke-width="1.2" stroke-linejoin="round"/><path d="M133 98 L139 104 L121 118 L114 113 Z" fill="#e8ecf8" stroke="#111" stroke-width="1.2" stroke-linejoin="round"/><circle cx="89" cy="31" r="7.5" fill="#111"/><circle cx="131" cy="30" r="7.5" fill="#111"/><ellipse cx="109.7" cy="55" rx="27" ry="23" fill="#fff" stroke="#111" stroke-width="1.5"/><path d="M81 50 Q78 40 84 34 Q84 25 93 25 Q98 20 106 23 Q113 19 120 23 Q128 21 132 27 Q140 30 138 38 Q142 45 137 51 Q134 44 128 43 Q124 37 116 38 Q110 34 102 38 Q94 37 90 43 Q84 44 81 50 Z" fill="#8a3b1a" stroke="#3a1a0a" stroke-width="1"/><path d="M96 50 L104 52 M114 52 L122 49" stroke="#222" stroke-width="1.6"/><path d="M108 56 L106 62 L110 62" stroke="#333" stroke-width="1" fill="none"/><ellipse cx="109" cy="67" rx="5" ry="3" fill="#333"/><path d="M105 66 L113 66" stroke="#fff" stroke-width="1"/></g></svg><div class="t" style="left:0;width:103.5px;text-align:center;top:100.5px;font-size:17px;color:#e8e8e8">靠墙说2</div></div>
<div class="a" style="left:24.7px;top:847.1px;width:103.5px;height:122.5px;border-radius:7px;background:#3d3d3d;overflow:hidden"><div class="a" style="left:0;top:92.0px;width:103.5px;height:30.5px;background:#333"></div><svg style="left:0;top:0" width="103.5" height="122.5" viewBox="0 0 103.5 122.5"><g transform="translate(3.65,2.29) scale(0.51)"><path d="M84 84 L50 78" stroke="#111" stroke-width="9" stroke-linecap="round"/><path d="M84 84 L50 78" stroke="#e2412a" stroke-width="6.5" stroke-linecap="round"/><ellipse cx="44" cy="77" rx="8" ry="5.5" fill="#e8ecf8" stroke="#111" stroke-width="1.5"/><path d="M100 134 L109 135 L104 151 L95 149 Z" fill="#3462c8" stroke="#111" stroke-width="1.4"/><ellipse cx="100" cy="152" rx="6.8" ry="5.8" fill="#111"/><path d="M87 117 L114 120 L112 134 L85 132 Z" fill="#3462c8" stroke="#111" stroke-width="1.4"/><rect x="96" y="119" width="6" height="5" fill="#f2f2f2"/><ellipse cx="108.5" cy="133" rx="6" ry="7" fill="#111"/><path d="M77 86 L89 74 L128 75 L139 95 L133 104 L86 104 Z" fill="#e2412a" stroke="#111" stroke-width="1.4" stroke-linejoin="round"/><path d="M88 77 L94 77 L96 87 L110 88 L112 77 L118 77 L122 106 Q123 119 110 120 L95 120 Q86 118 86 108 Z" fill="#3462c8" stroke="#111" stroke-width="1.3"/><ellipse cx="94" cy="90.3" rx="2.6" ry="3.2" fill="#f1d31c"/><ellipse cx="110.3" cy="91.8" rx="2.6" ry="3.2" fill="#f1d31c"/><path d="M77 89 L87 86 L91 108 L85 109 Z" fill="#e8ecf8" stroke="#111" stroke-width="1.2" stroke-linejoin="round"/><path d="M133 98 L139 104 L121 118 L114 113 Z" fill="#e8ecf8" stroke="#111" stroke-width="1.2" stroke-linejoin="round"/><circle cx="89" cy="31" r="7.5" fill="#111"/><circle cx="131" cy="30" r="7.5" fill="#111"/><ellipse cx="109.7" cy="55" rx="27" ry="23" fill="#fff" stroke="#111" stroke-width="1.5"/><path d="M81 50 Q78 40 84 34 Q84 25 93 25 Q98 20 106 23 Q113 19 120 23 Q128 21 132 27 Q140 30 138 38 Q142 45 137 51 Q134 44 128 43 Q124 37 116 38 Q110 34 102 38 Q94 37 90 43 Q84 44 81 50 Z" fill="#8a3b1a" stroke="#3a1a0a" stroke-width="1"/><path d="M96 50 L104 52 M114 52 L122 49" stroke="#222" stroke-width="1.6"/><path d="M108 56 L106 62 L110 62" stroke="#333" stroke-width="1" fill="none"/><ellipse cx="109" cy="67" rx="5" ry="3" fill="#333"/><path d="M105 66 L113 66" stroke="#fff" stroke-width="1"/></g></svg><div class="t" style="left:0;width:103.5px;text-align:center;top:100.5px;font-size:17px;color:#e8e8e8">靠墙说3</div></div>
<div class="a" style="left:158.5px;top:847.1px;width:103.5px;height:122.5px;border-radius:7px;background:#3d3d3d;overflow:hidden"><div class="a" style="left:0;top:92.0px;width:103.5px;height:30.5px;background:#333"></div><svg style="left:0;top:0" width="103.5" height="122.5" viewBox="0 0 103.5 122.5"><g transform="translate(3.05,2.29) scale(0.51)"><path d="M84 84 L50 78" stroke="#111" stroke-width="9" stroke-linecap="round"/><path d="M84 84 L50 78" stroke="#e2412a" stroke-width="6.5" stroke-linecap="round"/><ellipse cx="44" cy="77" rx="8" ry="5.5" fill="#e8ecf8" stroke="#111" stroke-width="1.5"/><path d="M100 134 L109 135 L104 151 L95 149 Z" fill="#3462c8" stroke="#111" stroke-width="1.4"/><ellipse cx="100" cy="152" rx="6.8" ry="5.8" fill="#111"/><path d="M87 117 L114 120 L112 134 L85 132 Z" fill="#3462c8" stroke="#111" stroke-width="1.4"/><rect x="96" y="119" width="6" height="5" fill="#f2f2f2"/><ellipse cx="108.5" cy="133" rx="6" ry="7" fill="#111"/><path d="M77 86 L89 74 L128 75 L139 95 L133 104 L86 104 Z" fill="#e2412a" stroke="#111" stroke-width="1.4" stroke-linejoin="round"/><path d="M88 77 L94 77 L96 87 L110 88 L112 77 L118 77 L122 106 Q123 119 110 120 L95 120 Q86 118 86 108 Z" fill="#3462c8" stroke="#111" stroke-width="1.3"/><ellipse cx="94" cy="90.3" rx="2.6" ry="3.2" fill="#f1d31c"/><ellipse cx="110.3" cy="91.8" rx="2.6" ry="3.2" fill="#f1d31c"/><path d="M77 89 L87 86 L91 108 L85 109 Z" fill="#e8ecf8" stroke="#111" stroke-width="1.2" stroke-linejoin="round"/><path d="M133 98 L139 104 L121 118 L114 113 Z" fill="#e8ecf8" stroke="#111" stroke-width="1.2" stroke-linejoin="round"/><circle cx="89" cy="31" r="7.5" fill="#111"/><circle cx="131" cy="30" r="7.5" fill="#111"/><ellipse cx="109.7" cy="55" rx="27" ry="23" fill="#fff" stroke="#111" stroke-width="1.5"/><path d="M81 50 Q78 40 84 34 Q84 25 93 25 Q98 20 106 23 Q113 19 120 23 Q128 21 132 27 Q140 30 138 38 Q142 45 137 51 Q134 44 128 43 Q124 37 116 38 Q110 34 102 38 Q94 37 90 43 Q84 44 81 50 Z" fill="#8a3b1a" stroke="#3a1a0a" stroke-width="1"/><path d="M96 50 L104 52 M114 52 L122 49" stroke="#222" stroke-width="1.6"/><path d="M108 56 L106 62 L110 62" stroke="#333" stroke-width="1" fill="none"/><ellipse cx="109" cy="67" rx="5" ry="3" fill="#333"/><path d="M105 66 L113 66" stroke="#fff" stroke-width="1"/></g></svg><div class="t" style="left:0;width:103.5px;text-align:center;top:100.5px;font-size:17px;color:#e8e8e8">靠墙说4</div></div>
<div class="a" style="left:292.4px;top:847.1px;width:103.5px;height:122.5px;border-radius:7px;background:#3d3d3d;overflow:hidden"><div class="a" style="left:0;top:92.0px;width:103.5px;height:30.5px;background:#333"></div><svg style="left:0;top:0" width="103.5" height="122.5" viewBox="0 0 103.5 122.5"><g transform="translate(-11.35,2.29) scale(0.51)"><path d="M134 84 L166 74" stroke="#111" stroke-width="9" stroke-linecap="round"/><path d="M134 84 L166 74" stroke="#e2412a" stroke-width="6.5" stroke-linecap="round"/><ellipse cx="172" cy="72" rx="8" ry="5.5" fill="#e8ecf8" stroke="#111" stroke-width="1.5"/><path d="M100 134 L109 135 L104 151 L95 149 Z" fill="#3462c8" stroke="#111" stroke-width="1.4"/><ellipse cx="100" cy="152" rx="6.8" ry="5.8" fill="#111"/><path d="M87 117 L114 120 L112 134 L85 132 Z" fill="#3462c8" stroke="#111" stroke-width="1.4"/><rect x="96" y="119" width="6" height="5" fill="#f2f2f2"/><ellipse cx="108.5" cy="133" rx="6" ry="7" fill="#111"/><path d="M77 86 L89 74 L128 75 L139 95 L133 104 L86 104 Z" fill="#e2412a" stroke="#111" stroke-width="1.4" stroke-linejoin="round"/><path d="M88 77 L94 77 L96 87 L110 88 L112 77 L118 77 L122 106 Q123 119 110 120 L95 120 Q86 118 86 108 Z" fill="#3462c8" stroke="#111" stroke-width="1.3"/><ellipse cx="94" cy="90.3" rx="2.6" ry="3.2" fill="#f1d31c"/><ellipse cx="110.3" cy="91.8" rx="2.6" ry="3.2" fill="#f1d31c"/><path d="M77 89 L87 86 L91 108 L85 109 Z" fill="#e8ecf8" stroke="#111" stroke-width="1.2" stroke-linejoin="round"/><path d="M133 98 L139 104 L121 118 L114 113 Z" fill="#e8ecf8" stroke="#111" stroke-width="1.2" stroke-linejoin="round"/><circle cx="89" cy="31" r="7.5" fill="#111"/><circle cx="131" cy="30" r="7.5" fill="#111"/><ellipse cx="109.7" cy="55" rx="27" ry="23" fill="#fff" stroke="#111" stroke-width="1.5"/><path d="M81 50 Q78 40 84 34 Q84 25 93 25 Q98 20 106 23 Q113 19 120 23 Q128 21 132 27 Q140 30 138 38 Q142 45 137 51 Q134 44 128 43 Q124 37 116 38 Q110 34 102 38 Q94 37 90 43 Q84 44 81 50 Z" fill="#8a3b1a" stroke="#3a1a0a" stroke-width="1"/><path d="M96 50 L104 52 M114 52 L122 49" stroke="#222" stroke-width="1.6"/><path d="M108 56 L106 62 L110 62" stroke="#333" stroke-width="1" fill="none"/><ellipse cx="109" cy="67" rx="5" ry="3" fill="#333"/><path d="M105 66 L113 66" stroke="#fff" stroke-width="1"/></g></svg><div class="t" style="left:0;width:103.5px;text-align:center;top:100.5px;font-size:17px;color:#e8e8e8">招手过来</div></div>
<div class="a" style="left:425.9px;top:847.1px;width:103.5px;height:122.5px;border-radius:7px;background:#3d3d3d;overflow:hidden"><div class="a" style="left:0;top:92.0px;width:103.5px;height:30.5px;background:#333"></div><svg style="left:0;top:0" width="103.5" height="122.5" viewBox="0 0 103.5 122.5"><g transform="translate(-3.05,2.29) scale(0.51)"><path d="M100 134 L109 135 L104 151 L95 149 Z" fill="#3462c8" stroke="#111" stroke-width="1.4"/><ellipse cx="100" cy="152" rx="6.8" ry="5.8" fill="#111"/><path d="M87 117 L114 120 L112 134 L85 132 Z" fill="#3462c8" stroke="#111" stroke-width="1.4"/><rect x="96" y="119" width="6" height="5" fill="#f2f2f2"/><ellipse cx="108.5" cy="133" rx="6" ry="7" fill="#111"/><path d="M77 86 L89 74 L128 75 L139 95 L133 104 L86 104 Z" fill="#e2412a" stroke="#111" stroke-width="1.4" stroke-linejoin="round"/><path d="M88 77 L94 77 L96 87 L110 88 L112 77 L118 77 L122 106 Q123 119 110 120 L95 120 Q86 118 86 108 Z" fill="#3462c8" stroke="#111" stroke-width="1.3"/><ellipse cx="94" cy="90.3" rx="2.6" ry="3.2" fill="#f1d31c"/><ellipse cx="110.3" cy="91.8" rx="2.6" ry="3.2" fill="#f1d31c"/><path d="M77 89 L87 86 L91 108 L85 109 Z" fill="#e8ecf8" stroke="#111" stroke-width="1.2" stroke-linejoin="round"/><path d="M133 98 L139 104 L121 118 L114 113 Z" fill="#e8ecf8" stroke="#111" stroke-width="1.2" stroke-linejoin="round"/><circle cx="89" cy="31" r="7.5" fill="#111"/><circle cx="131" cy="30" r="7.5" fill="#111"/><ellipse cx="109.7" cy="55" rx="27" ry="23" fill="#fff" stroke="#111" stroke-width="1.5"/><path d="M81 50 Q78 40 84 34 Q84 25 93 25 Q98 20 106 23 Q113 19 120 23 Q128 21 132 27 Q140 30 138 38 Q142 45 137 51 Q134 44 128 43 Q124 37 116 38 Q110 34 102 38 Q94 37 90 43 Q84 44 81 50 Z" fill="#8a3b1a" stroke="#3a1a0a" stroke-width="1"/><path d="M96 50 L104 52 M114 52 L122 49" stroke="#222" stroke-width="1.6"/><path d="M108 56 L106 62 L110 62" stroke="#333" stroke-width="1" fill="none"/><ellipse cx="109" cy="67" rx="5" ry="3" fill="#333"/><path d="M105 66 L113 66" stroke="#fff" stroke-width="1"/></g></svg><div class="t" style="left:0;width:103.5px;text-align:center;top:100.5px;font-size:17px;color:#e8e8e8">自满的说</div></div></div>
<div class="a" style="left:0;top:983px;width:1112px;height:4px;background:#ffffff"></div>
<div class="pn" style="left:1112px;width:549px;height:987px;background:#1d1e1c"><div class="a" style="left:0px;top:0px;width:549px;height:1px;background:#17171f;border-radius:0px;"></div>
<svg style="left:132px;top:1px" width="288" height="510" viewBox="0 0 288 510"><defs><filter id="n3" x="0" y="0" width="100%" height="100%"><feTurbulence type="fractalNoise" baseFrequency="0.35 0.25" numOctaves="2" seed="4"/><feColorMatrix type="matrix" values="0 0 0 0 0  0 0 0 0 0  0 0 0 0 0  0 0 0 -0.9 0.55"/></filter></defs><rect width="288" height="510" fill="#e5e5e5"/><rect width="288" height="510" fill="#000" filter="url(#n3)" opacity="0.09"/></svg>
<svg style="left:183.3px;top:164px" width="186" height="186" viewBox="0 0 186 186"><rect x="0.5" y="0.5" width="185" height="184.5" fill="none" stroke="#fdfdfd" stroke-width="1.6" stroke-dasharray="5.5 3.5"/></svg>
<svg style="left:183.3px;top:164px" width="185" height="185" viewBox="0 0 185 185"><path d="M100 134 L109 135 L104 151 L95 149 Z" fill="#3462c8" stroke="#111" stroke-width="1.4"/><ellipse cx="100" cy="152" rx="6.8" ry="5.8" fill="#111"/><path d="M87 117 L114 120 L112 134 L85 132 Z" fill="#3462c8" stroke="#111" stroke-width="1.4"/><rect x="96" y="119" width="6" height="5" fill="#f2f2f2"/><ellipse cx="108.5" cy="133" rx="6" ry="7" fill="#111"/><path d="M77 86 L89 74 L128 75 L139 95 L133 104 L86 104 Z" fill="#e2412a" stroke="#111" stroke-width="1.4" stroke-linejoin="round"/><path d="M88 77 L94 77 L96 87 L110 88 L112 77 L118 77 L122 106 Q123 119 110 120 L95 120 Q86 118 86 108 Z" fill="#3462c8" stroke="#111" stroke-width="1.3"/><ellipse cx="94" cy="90.3" rx="2.6" ry="3.2" fill="#f1d31c"/><ellipse cx="110.3" cy="91.8" rx="2.6" ry="3.2" fill="#f1d31c"/><path d="M77 89 L87 86 L91 108 L85 109 Z" fill="#e8ecf8" stroke="#111" stroke-width="1.2" stroke-linejoin="round"/><path d="M133 98 L139 104 L121 118 L114 113 Z" fill="#e8ecf8" stroke="#111" stroke-width="1.2" stroke-linejoin="round"/><circle cx="89" cy="31" r="7.5" fill="#111"/><circle cx="131" cy="30" r="7.5" fill="#111"/><ellipse cx="109.7" cy="55" rx="27" ry="23" fill="#fff" stroke="#111" stroke-width="1.5"/><path d="M81 50 Q78 40 84 34 Q84 25 93 25 Q98 20 106 23 Q113 19 120 23 Q128 21 132 27 Q140 30 138 38 Q142 45 137 51 Q134 44 128 43 Q124 37 116 38 Q110 34 102 38 Q94 37 90 43 Q84 44 81 50 Z" fill="#8a3b1a" stroke="#3a1a0a" stroke-width="1"/><path d="M96 50 L104 52 M114 52 L122 49" stroke="#222" stroke-width="1.6"/><path d="M108 56 L106 62 L110 62" stroke="#333" stroke-width="1" fill="none"/><ellipse cx="109" cy="67" rx="5" ry="3" fill="#333"/><path d="M105 66 L113 66" stroke="#fff" stroke-width="1"/></svg>
<svg style="left:168.3px;top:149px" width="30" height="30" viewBox="0 0 30 30"><circle cx="15" cy="15" r="15" fill="#1d1d1d"/><path d="M10 10 L20 20 M20 10 L10 20" stroke="#fff" stroke-width="2.2" stroke-linecap="round"/></svg>
<svg style="left:168.3px;top:333.5px" width="30" height="30" viewBox="0 0 30 30"><circle cx="15" cy="15" r="15" fill="#1d1d1d"/><path d="M14 8 L14 17 L9 17 Z M16 8 L16 17 L21 17 Z" fill="#fff"/><path d="M9 21 L21 21 M9 21 L11 19.2 M9 21 L11 22.8 M21 21 L19 19.2 M21 21 L19 22.8" stroke="#fff" stroke-width="1.5" stroke-linecap="round"/></svg>
<svg style="left:353.3px;top:333.5px" width="30" height="30" viewBox="0 0 30 30"><circle cx="15" cy="15" r="15" fill="#1d1d1d"/><path d="M20.5 11.5 A6.5 6.5 0 1 0 21.5 16" stroke="#fff" stroke-width="2.2" fill="none" stroke-linecap="round"/><path d="M17.5 9 L22.5 9.5 L21.5 14.5 Z" fill="#fff"/></svg>
<div class="a" style="left:0;top:512px;width:549px;height:480px;background:#202020;border-radius:12px 12px 0 0"></div>
<svg style="left:28px;top:529px" width="24" height="24" viewBox="0 0 24 24"><path d="M4.5 4 L20.5 20 M20.5 4 L4.5 20" stroke="#fff" stroke-width="2.6" stroke-linecap="round"/></svg>
<div class="t" style="left:99.5px;top:530.5px;font-size:21px;color:#8c8c8c;font-weight:normal;">自定义</div>
<div class="t" style="left:194.8px;top:530.5px;font-size:21px;color:#fff;font-weight:normal;">阿雕角色</div>
<div class="t" style="left:312.3px;top:530.5px;font-size:21px;color:#8c8c8c;font-weight:normal;">主播角色</div>
<div class="t" style="left:429px;top:530.5px;font-size:21px;color:#8c8c8c;font-weight:normal;">真言角色</div>
<div class="t" style="left:545px;top:530.5px;font-size:21px;color:#8c8c8c;font-weight:normal;">主播</div>
<div class="a" style="left:229px;top:564px;width:17.5px;height:4.6px;background:#4d8bf2;border-radius:2.3px;"></div>
<div class="a" style="left:0px;top:569px;width:549px;height:1px;background:#333;border-radius:0px;"></div>
<div class="a" style="left:212.7px;top:582.1px;width:122.6px;height:36.8px;background:#313131;border-radius:18.4px;"></div>
<div class="t" style="left:-1.5px;top:591.5px;font-size:18px;color:#e6e6e6;font-weight:normal;">阿雕-少年</div>
<div class="t" style="left:125px;top:591.5px;font-size:18px;color:#e6e6e6;font-weight:normal;">阿雕-女</div>
<div class="t" style="left:234.6px;top:591.5px;font-size:18px;color:#4d8bf2;font-weight:normal;">阿雕-男性</div>
<div class="t" style="left:362.3px;top:591.5px;font-size:18px;color:#e6e6e6;font-weight:normal;">阿雕-老人</div>
<div class="t" style="left:490.7px;top:591.5px;font-size:18px;color:#e6e6e6;font-weight:normal;">阿雕-职业</div>
<div class="a" style="left:24px;top:637.7px;width:102.6px;height:122.6px;border-radius:7px;background:#3d3d3d;overflow:hidden"><div class="a" style="left:0;top:92.0px;width:102.6px;height:30.6px;background:#333"></div><svg style="left:0;top:0" width="102.6" height="122.6" viewBox="0 0 102.6 122.6"><g transform="translate(51.3,22) scale(1.18)"><g transform="translate(0.00,0.00) scale(1)"><rect x="-5.8" y="39" width="3.8" height="15" fill="#222"/><rect x="2" y="39" width="3.8" height="15" fill="#222"/><ellipse cx="-4.2" cy="54.5" rx="2.8" ry="2.1" fill="#111"/><ellipse cx="4.2" cy="54.5" rx="2.8" ry="2.1" fill="#111"/><path d="M-8 26 L-14.5 40" stroke="#2f9a8a" stroke-width="3.4" stroke-linecap="round"/><path d="M8 26 L14.5 40" stroke="#2f9a8a" stroke-width="3.4" stroke-linecap="round"/><circle cx="-15" cy="41.5" r="1.8" fill="#fff"/><circle cx="15" cy="41.5" r="1.8" fill="#fff"/><path d="M-9 24 L9 24 L11.5 41 L-11.5 41 Z" fill="#2f9a8a"/><path d="M-4 24 L4 24 L3 41 L-3 41 Z" fill="#eee"/><path d="M-3 34 L3 34 L0 44 Z" fill="#c9a030"/><circle cx="-9" cy="6" r="4" fill="#111"/><circle cx="9" cy="6" r="4" fill="#111"/><ellipse cx="0" cy="15" rx="11.3" ry="9.8" fill="#fff"/><ellipse cx="-6.3" cy="17.5" rx="3.6" ry="2.2" fill="#f07c84" opacity="0.75"/><ellipse cx="6.3" cy="17.5" rx="3.6" ry="2.2" fill="#f07c84" opacity="0.75"/><path d="M-5.5 13 L-1.5 13.6 M1.5 13.6 L5.5 13" stroke="#333" stroke-width="1.2"/><path d="M-2.5 20 L2.5 20" stroke="#555" stroke-width="0.9"/></g></g></svg><div class="a" style="left:0;top:0;width:27px;height:19.5px;background:#5d5d5d;border-radius:0 0 6px 0"></div><div class="t" style="left:2.5px;top:4px;font-size:13.5px;font-weight:bold;color:#f2f2f2">DIY</div><div class="t" style="left:0;width:102.6px;text-align:center;top:100.5px;font-size:16.2px;color:#e8e8e8">少盟主</div></div>
<div class="a" style="left:157.9px;top:637.7px;width:102.6px;height:122.6px;border-radius:7px;background:#3d3d3d;overflow:hidden"><div class="a" style="left:0;top:92.0px;width:102.6px;height:30.6px;background:#333"></div><svg style="left:0;top:0" width="102.6" height="122.6" viewBox="0 0 102.6 122.6"><g transform="translate(51.3,22) scale(1.18)"><g transform="translate(0.00,0.00) scale(1)"><rect x="-5.8" y="39" width="3.8" height="15" fill="#b54a3c"/><rect x="2" y="39" width="3.8" height="15" fill="#b54a3c"/><ellipse cx="-4.2" cy="54.5" rx="2.8" ry="2.1" fill="#222"/><ellipse cx="4.2" cy="54.5" rx="2.8" ry="2.1" fill="#222"/><path d="M-8 26 L-14.5 40" stroke="#c8574a" stroke-width="3.4" stroke-linecap="round"/><path d="M8 26 L14.5 40" stroke="#c8574a" stroke-width="3.4" stroke-linecap="round"/><circle cx="-15" cy="41.5" r="1.8" fill="#fff"/><circle cx="15" cy="41.5" r="1.8" fill="#fff"/><path d="M-9 24 L9 24 L11.5 41 L-11.5 41 Z" fill="#c8574a"/><circle cx="-9" cy="6" r="4" fill="#111"/><circle cx="9" cy="6" r="4" fill="#111"/><ellipse cx="0" cy="15" rx="11.3" ry="9.8" fill="#fff"/><ellipse cx="-6.3" cy="17.5" rx="3.6" ry="2.2" fill="#f07c84" opacity="0.75"/><ellipse cx="6.3" cy="17.5" rx="3.6" ry="2.2" fill="#f07c84" opacity="0.75"/><path d="M-5.5 13 L-1.5 13.6 M1.5 13.6 L5.5 13" stroke="#333" stroke-width="1.2"/><path d="M-2.5 20 L2.5 20" stroke="#555" stroke-width="0.9"/></g></g></svg><div class="a" style="left:0;top:0;width:27px;height:19.5px;background:#5d5d5d;border-radius:0 0 6px 0"></div><div class="t" style="left:2.5px;top:4px;font-size:13.5px;font-weight:bold;color:#f2f2f2">DIY</div><div class="t" style="left:0;width:102.6px;text-align:center;top:100.5px;font-size:16.2px;color:#e8e8e8">阿年</div></div>
<div class="a" style="left:291.7px;top:637.7px;width:102.6px;height:122.6px;border-radius:7px;background:#3d3d3d;overflow:hidden"><div class="a" style="left:0;top:92.0px;width:102.6px;height:30.6px;background:#333"></div><svg style="left:0;top:0" width="102.6" height="122.6" viewBox="0 0 102.6 122.6"><g transform="translate(51.3,22) scale(1.18)"><g transform="translate(0.00,0.00) scale(1)"><rect x="-5.8" y="39" width="3.8" height="15" fill="#111"/><rect x="2" y="39" width="3.8" height="15" fill="#111"/><ellipse cx="-4.2" cy="54.5" rx="2.8" ry="2.1" fill="#111"/><ellipse cx="4.2" cy="54.5" rx="2.8" ry="2.1" fill="#111"/><path d="M-8 26 L-14.5 40" stroke="#dd1b14" stroke-width="3.4" stroke-linecap="round"/><path d="M8 26 L14.5 40" stroke="#dd1b14" stroke-width="3.4" stroke-linecap="round"/><circle cx="-15" cy="41.5" r="1.8" fill="#fff"/><circle cx="15" cy="41.5" r="1.8" fill="#fff"/><path d="M-9 24 L9 24 L11.5 41 L-11.5 41 Z" fill="#dd1b14"/><rect x="-11" y="37" width="22" height="5" fill="#6a28c8"/><circle cx="-9" cy="6" r="4" fill="#111"/><circle cx="9" cy="6" r="4" fill="#111"/><ellipse cx="0" cy="15" rx="11.3" ry="9.8" fill="#fff"/><ellipse cx="-6.3" cy="17.5" rx="3.6" ry="2.2" fill="#f07c84" opacity="0.75"/><ellipse cx="6.3" cy="17.5" rx="3.6" ry="2.2" fill="#f07c84" opacity="0.75"/><path d="M-5.5 13 L-1.5 13.6 M1.5 13.6 L5.5 13" stroke="#333" stroke-width="1.2"/><path d="M-2.5 20 L2.5 20" stroke="#555" stroke-width="0.9"/></g></g></svg><div class="a" style="left:0;top:0;width:27px;height:19.5px;background:#5d5d5d;border-radius:0 0 6px 0"></div><div class="t" style="left:2.5px;top:4px;font-size:13.5px;font-weight:bold;color:#f2f2f2">DIY</div><div class="t" style="left:0;width:102.6px;text-align:center;top:100.5px;font-size:16.2px;color:#e8e8e8">阿筒</div></div>
<div class="a" style="left:425.5px;top:637.7px;width:102.6px;height:122.6px;border-radius:7px;background:#3d3d3d;overflow:hidden"><div class="a" style="left:0;top:92.0px;width:102.6px;height:30.6px;background:#333"></div><svg style="left:0;top:0" width="102.6" height="122.6" viewBox="0 0 102.6 122.6"><g transform="translate(51.3,22) scale(1.18)"><g transform="translate(0.00,0.00) scale(1)"><rect x="-5.8" y="39" width="3.8" height="15" fill="#333"/><rect x="2" y="39" width="3.8" height="15" fill="#333"/><ellipse cx="-4.2" cy="54.5" rx="2.8" ry="2.1" fill="#111"/><ellipse cx="4.2" cy="54.5" rx="2.8" ry="2.1" fill="#111"/><path d="M-8 26 L-14.5 40" stroke="#e8c840" stroke-width="3.4" stroke-linecap="round"/><path d="M8 26 L14.5 40" stroke="#e8c840" stroke-width="3.4" stroke-linecap="round"/><circle cx="-15" cy="41.5" r="1.8" fill="#fff"/><circle cx="15" cy="41.5" r="1.8" fill="#fff"/><path d="M-9 24 L9 24 L11.5 41 L-11.5 41 Z" fill="#e8c840"/><circle cx="-9" cy="6" r="4" fill="#111"/><circle cx="9" cy="6" r="4" fill="#111"/><ellipse cx="0" cy="15" rx="11.3" ry="9.8" fill="#fff"/><ellipse cx="-6.3" cy="17.5" rx="3.6" ry="2.2" fill="#f07c84" opacity="0.75"/><ellipse cx="6.3" cy="17.5" rx="3.6" ry="2.2" fill="#f07c84" opacity="0.75"/><path d="M-5.5 13 L-1.5 13.6 M1.5 13.6 L5.5 13" stroke="#333" stroke-width="1.2"/><path d="M-2.5 20 L2.5 20" stroke="#555" stroke-width="0.9"/></g></g></svg><div class="t" style="left:0;width:102.6px;text-align:center;top:100.5px;font-size:16.2px;color:#e8e8e8">罗哥</div></div>
<div class="a" style="left:24px;top:780.6px;width:102.6px;height:122.6px;border-radius:7px;background:#3d3d3d;overflow:hidden"><div class="a" style="left:0;top:92.0px;width:102.6px;height:30.6px;background:#333"></div><svg style="left:0;top:0" width="102.6" height="122.6" viewBox="0 0 102.6 122.6"><g transform="translate(51.3,22) scale(1.18)"><g transform="translate(0.00,0.00) scale(1)"><rect x="-5.8" y="39" width="3.8" height="15" fill="#e8c890"/><rect x="2" y="39" width="3.8" height="15" fill="#e8c890"/><ellipse cx="-4.2" cy="54.5" rx="2.8" ry="2.1" fill="#111"/><ellipse cx="4.2" cy="54.5" rx="2.8" ry="2.1" fill="#111"/><path d="M-8 26 L-14.5 40" stroke="#222" stroke-width="3.4" stroke-linecap="round"/><path d="M8 26 L14.5 40" stroke="#222" stroke-width="3.4" stroke-linecap="round"/><circle cx="-15" cy="41.5" r="1.8" fill="#fff"/><circle cx="15" cy="41.5" r="1.8" fill="#fff"/><path d="M-9 24 L9 24 L11.5 41 L-11.5 41 Z" fill="#d93030"/><circle cx="-9" cy="6" r="4" fill="#111"/><circle cx="9" cy="6" r="4" fill="#111"/><ellipse cx="0" cy="15" rx="11.3" ry="9.8" fill="#fff"/><ellipse cx="-6.3" cy="17.5" rx="3.6" ry="2.2" fill="#f07c84" opacity="0.75"/><ellipse cx="6.3" cy="17.5" rx="3.6" ry="2.2" fill="#f07c84" opacity="0.75"/><path d="M-5.5 13 L-1.5 13.6 M1.5 13.6 L5.5 13" stroke="#333" stroke-width="1.2"/><path d="M-2.5 20 L2.5 20" stroke="#555" stroke-width="0.9"/></g></g></svg><div class="t" style="left:0;width:102.6px;text-align:center;top:100.5px;font-size:16.2px;color:#e8e8e8">木木</div></div>
<div class="a" style="left:157.9px;top:780.6px;width:102.6px;height:122.6px;border-radius:7px;background:#3d3d3d;overflow:hidden"><div class="a" style="left:0;top:92.0px;width:102.6px;height:30.6px;background:#333"></div><svg style="left:0;top:0" width="102.6" height="122.6" viewBox="0 0 102.6 122.6"><g transform="translate(51.3,22) scale(1.18)"><g transform="translate(0.00,0.00) scale(1)"><rect x="-5.8" y="39" width="3.8" height="15" fill="#555"/><rect x="2" y="39" width="3.8" height="15" fill="#555"/><ellipse cx="-4.2" cy="54.5" rx="2.8" ry="2.1" fill="#111"/><ellipse cx="4.2" cy="54.5" rx="2.8" ry="2.1" fill="#111"/><path d="M-8 26 L-14.5 40" stroke="#e8b830" stroke-width="3.4" stroke-linecap="round"/><path d="M8 26 L14.5 40" stroke="#e8b830" stroke-width="3.4" stroke-linecap="round"/><circle cx="-15" cy="41.5" r="1.8" fill="#fff"/><circle cx="15" cy="41.5" r="1.8" fill="#fff"/><path d="M-9 24 L9 24 L11.5 41 L-11.5 41 Z" fill="#e8b830"/><circle cx="-9" cy="6" r="4" fill="#111"/><circle cx="9" cy="6" r="4" fill="#111"/><ellipse cx="0" cy="15" rx="11.3" ry="9.8" fill="#fff"/><ellipse cx="-6.3" cy="17.5" rx="3.6" ry="2.2" fill="#f07c84" opacity="0.75"/><ellipse cx="6.3" cy="17.5" rx="3.6" ry="2.2" fill="#f07c84" opacity="0.75"/><path d="M-5.5 13 L-1.5 13.6 M1.5 13.6 L5.5 13" stroke="#333" stroke-width="1.2"/><path d="M-2.5 20 L2.5 20" stroke="#555" stroke-width="0.9"/></g></g></svg><div class="t" style="left:0;width:102.6px;text-align:center;top:100.5px;font-size:16.2px;color:#e8e8e8">鸡哥</div></div>
<div class="a" style="left:291.7px;top:780.6px;width:102.6px;height:122.6px;border-radius:7px;background:#3d3d3d;overflow:hidden"><div class="a" style="left:0;top:92.0px;width:102.6px;height:30.6px;background:#333"></div><svg style="left:0;top:0" width="102.6" height="122.6" viewBox="0 0 102.6 122.6"><g transform="translate(51.3,22) scale(1.18)"><g transform="translate(0.00,0.00) scale(1)"><rect x="-5.8" y="39" width="3.8" height="15" fill="#d04028"/><rect x="2" y="39" width="3.8" height="15" fill="#d04028"/><ellipse cx="-4.2" cy="54.5" rx="2.8" ry="2.1" fill="#111"/><ellipse cx="4.2" cy="54.5" rx="2.8" ry="2.1" fill="#111"/><path d="M-8 26 L-14.5 40" stroke="#d8402a" stroke-width="3.4" stroke-linecap="round"/><path d="M8 26 L14.5 40" stroke="#d8402a" stroke-width="3.4" stroke-linecap="round"/><circle cx="-15" cy="41.5" r="1.8" fill="#fff"/><circle cx="15" cy="41.5" r="1.8" fill="#fff"/><path d="M-9 24 L9 24 L11.5 41 L-11.5 41 Z" fill="#d8402a"/><circle cx="-9" cy="6" r="4" fill="#111"/><circle cx="9" cy="6" r="4" fill="#111"/><ellipse cx="0" cy="15" rx="11.3" ry="9.8" fill="#fff"/><ellipse cx="-6.3" cy="17.5" rx="3.6" ry="2.2" fill="#f07c84" opacity="0.75"/><ellipse cx="6.3" cy="17.5" rx="3.6" ry="2.2" fill="#f07c84" opacity="0.75"/><path d="M-5.5 13 L-1.5 13.6 M1.5 13.6 L5.5 13" stroke="#333" stroke-width="1.2"/><path d="M-2.5 20 L2.5 20" stroke="#555" stroke-width="0.9"/></g></g></svg><div class="t" style="left:0;width:102.6px;text-align:center;top:100.5px;font-size:16.2px;color:#e8e8e8">阿哐</div></div>
<div class="a" style="left:425.5px;top:780.6px;width:102.6px;height:122.6px;border-radius:7px;background:#3d3d3d;overflow:hidden"><div class="a" style="left:0;top:92.0px;width:102.6px;height:30.6px;background:#333"></div><svg style="left:0;top:0" width="102.6" height="122.6" viewBox="0 0 102.6 122.6"><g transform="translate(51.3,22) scale(1.18)"><g transform="translate(0.00,0.00) scale(1)"><rect x="-5.8" y="39" width="3.8" height="15" fill="#6b4a30"/><rect x="2" y="39" width="3.8" height="15" fill="#6b4a30"/><ellipse cx="-4.2" cy="54.5" rx="2.8" ry="2.1" fill="#111"/><ellipse cx="4.2" cy="54.5" rx="2.8" ry="2.1" fill="#111"/><path d="M-8 26 L-14.5 40" stroke="#f2a830" stroke-width="3.4" stroke-linecap="round"/><path d="M8 26 L14.5 40" stroke="#f2a830" stroke-width="3.4" stroke-linecap="round"/><circle cx="-15" cy="41.5" r="1.8" fill="#fff"/><circle cx="15" cy="41.5" r="1.8" fill="#fff"/><path d="M-9 24 L9 24 L11.5 41 L-11.5 41 Z" fill="#f2a830"/><rect x="-11" y="33" width="22" height="3" fill="#e880b0"/><circle cx="-9" cy="6" r="4" fill="#111"/><circle cx="9" cy="6" r="4" fill="#111"/><ellipse cx="0" cy="15" rx="11.3" ry="9.8" fill="#fff"/><path d="M-10 10 Q-9 3 0 3.5 Q9 3 10 10 Q0 7 -10 10 Z" fill="#5a3a20"/><ellipse cx="-6.3" cy="17.5" rx="3.6" ry="2.2" fill="#f07c84" opacity="0.75"/><ellipse cx="6.3" cy="17.5" rx="3.6" ry="2.2" fill="#f07c84" opacity="0.75"/><path d="M-5.5 13 L-1.5 13.6 M1.5 13.6 L5.5 13" stroke="#333" stroke-width="1.2"/><path d="M-2.5 20 L2.5 20" stroke="#555" stroke-width="0.9"/></g></g></svg><div class="t" style="left:0;width:102.6px;text-align:center;top:100.5px;font-size:16.2px;color:#e8e8e8">胖虎</div></div>
<div class="a" style="left:24px;top:923.7px;width:102.6px;height:122.6px;border-radius:7px;background:#3d3d3d;overflow:hidden"><div class="a" style="left:0;top:92.0px;width:102.6px;height:30.6px;background:#333"></div><svg style="left:0;top:0" width="102.6" height="122.6" viewBox="0 0 102.6 122.6"><g transform="translate(51.3,11) scale(1.32)"><g transform="translate(0.00,0.00) scale(1)"><rect x="-5.8" y="39" width="3.8" height="15" fill="#333"/><rect x="2" y="39" width="3.8" height="15" fill="#333"/><ellipse cx="-4.2" cy="54.5" rx="2.8" ry="2.1" fill="#111"/><ellipse cx="4.2" cy="54.5" rx="2.8" ry="2.1" fill="#111"/><path d="M-8 26 L-14.5 40" stroke="#f2a030" stroke-width="3.4" stroke-linecap="round"/><path d="M8 26 L14.5 40" stroke="#f2a030" stroke-width="3.4" stroke-linecap="round"/><circle cx="-15" cy="41.5" r="1.8" fill="#fff"/><circle cx="15" cy="41.5" r="1.8" fill="#fff"/><path d="M-9 24 L9 24 L11.5 41 L-11.5 41 Z" fill="#f2a030"/><circle cx="-9" cy="6" r="4" fill="#111"/><circle cx="9" cy="6" r="4" fill="#111"/><ellipse cx="0" cy="15" rx="11.3" ry="9.8" fill="#fff"/><path d="M-10 10 Q-9 3 0 3.5 Q9 3 10 10 Q0 7 -10 10 Z" fill="#777"/><ellipse cx="-6.3" cy="17.5" rx="3.6" ry="2.2" fill="#f07c84" opacity="0.75"/><ellipse cx="6.3" cy="17.5" rx="3.6" ry="2.2" fill="#f07c84" opacity="0.75"/><path d="M-5.5 13 L-1.5 13.6 M1.5 13.6 L5.5 13" stroke="#333" stroke-width="1.2"/><path d="M-2.5 20 L2.5 20" stroke="#555" stroke-width="0.9"/></g></g></svg><div class="t" style="left:0;width:102.6px;text-align:center;top:100.5px;font-size:16.2px;color:#e8e8e8"></div></div>
<div class="a" style="left:157.9px;top:923.7px;width:102.6px;height:122.6px;border-radius:7px;background:#3d3d3d;overflow:hidden"><div class="a" style="left:0;top:92.0px;width:102.6px;height:30.6px;background:#333"></div><svg style="left:0;top:0" width="102.6" height="122.6" viewBox="0 0 102.6 122.6"><g transform="translate(51.3,11) scale(1.32)"><g transform="translate(0.00,0.00) scale(1)"><rect x="-5.8" y="39" width="3.8" height="15" fill="#333"/><rect x="2" y="39" width="3.8" height="15" fill="#333"/><ellipse cx="-4.2" cy="54.5" rx="2.8" ry="2.1" fill="#111"/><ellipse cx="4.2" cy="54.5" rx="2.8" ry="2.1" fill="#111"/><path d="M-8 26 L-14.5 40" stroke="#f4f4f4" stroke-width="3.4" stroke-linecap="round"/><path d="M8 26 L14.5 40" stroke="#f4f4f4" stroke-width="3.4" stroke-linecap="round"/><circle cx="-15" cy="41.5" r="1.8" fill="#fff"/><circle cx="15" cy="41.5" r="1.8" fill="#fff"/><path d="M-9 24 L9 24 L11.5 41 L-11.5 41 Z" fill="#e02a20"/><rect x="-4" y="28" width="8" height="8" fill="#f0c030"/><circle cx="-9" cy="6" r="4" fill="#111"/><circle cx="9" cy="6" r="4" fill="#111"/><ellipse cx="0" cy="15" rx="11.3" ry="9.8" fill="#fff"/><path d="M-10 10 Q-9 3 0 3.5 Q9 3 10 10 Q0 7 -10 10 Z" fill="#6a4030"/><ellipse cx="-6.3" cy="17.5" rx="3.6" ry="2.2" fill="#f07c84" opacity="0.75"/><ellipse cx="6.3" cy="17.5" rx="3.6" ry="2.2" fill="#f07c84" opacity="0.75"/><path d="M-5.5 13 L-1.5 13.6 M1.5 13.6 L5.5 13" stroke="#333" stroke-width="1.2"/><path d="M-2.5 20 L2.5 20" stroke="#555" stroke-width="0.9"/></g></g></svg><div class="t" style="left:0;width:102.6px;text-align:center;top:100.5px;font-size:16.2px;color:#e8e8e8"></div></div>
<div class="a" style="left:291.7px;top:923.7px;width:102.6px;height:122.6px;border-radius:7px;background:#3d3d3d;overflow:hidden"><div class="a" style="left:0;top:92.0px;width:102.6px;height:30.6px;background:#333"></div><svg style="left:0;top:0" width="102.6" height="122.6" viewBox="0 0 102.6 122.6"><g transform="translate(51.3,11) scale(1.32)"><g transform="translate(0.00,0.00) scale(1)"><rect x="-5.8" y="39" width="3.8" height="15" fill="#333"/><rect x="2" y="39" width="3.8" height="15" fill="#333"/><ellipse cx="-4.2" cy="54.5" rx="2.8" ry="2.1" fill="#111"/><ellipse cx="4.2" cy="54.5" rx="2.8" ry="2.1" fill="#111"/><path d="M-8 26 L-14.5 40" stroke="#eeeeee" stroke-width="3.4" stroke-linecap="round"/><path d="M8 26 L14.5 40" stroke="#eeeeee" stroke-width="3.4" stroke-linecap="round"/><circle cx="-15" cy="41.5" r="1.8" fill="#fff"/><circle cx="15" cy="41.5" r="1.8" fill="#fff"/><path d="M-9 24 L9 24 L11.5 41 L-11.5 41 Z" fill="#eeeeee"/><circle cx="-9" cy="6" r="4" fill="#111"/><circle cx="9" cy="6" r="4" fill="#111"/><ellipse cx="0" cy="15" rx="11.3" ry="9.8" fill="#fff"/><path d="M-10 12 Q-9 1 0 2 Q10 1 10 12 Q5 7 0 7 Q-5 7 -10 12 Z" fill="#d86a30"/><ellipse cx="-6.3" cy="17.5" rx="3.6" ry="2.2" fill="#f07c84" opacity="0.75"/><ellipse cx="6.3" cy="17.5" rx="3.6" ry="2.2" fill="#f07c84" opacity="0.75"/><path d="M-5.5 13 L-1.5 13.6 M1.5 13.6 L5.5 13" stroke="#333" stroke-width="1.2"/><path d="M-2.5 20 L2.5 20" stroke="#555" stroke-width="0.9"/></g></g></svg><div class="t" style="left:0;width:102.6px;text-align:center;top:100.5px;font-size:16.2px;color:#e8e8e8"></div></div>
<div class="a" style="left:425.5px;top:923.7px;width:102.6px;height:122.6px;border-radius:7px;background:#3d3d3d;overflow:hidden"><div class="a" style="left:0;top:92.0px;width:102.6px;height:30.6px;background:#333"></div><svg style="left:0;top:0" width="102.6" height="122.6" viewBox="0 0 102.6 122.6"><g transform="translate(51.3,11) scale(1.32)"><g transform="translate(0.00,0.00) scale(1)"><rect x="-5.8" y="39" width="3.8" height="15" fill="#333"/><rect x="2" y="39" width="3.8" height="15" fill="#333"/><ellipse cx="-4.2" cy="54.5" rx="2.8" ry="2.1" fill="#111"/><ellipse cx="4.2" cy="54.5" rx="2.8" ry="2.1" fill="#111"/><path d="M-8 26 L-14.5 40" stroke="#f4f4f4" stroke-width="3.4" stroke-linecap="round"/><path d="M8 26 L14.5 40" stroke="#f4f4f4" stroke-width="3.4" stroke-linecap="round"/><circle cx="-15" cy="41.5" r="1.8" fill="#fff"/><circle cx="15" cy="41.5" r="1.8" fill="#fff"/><path d="M-9 24 L9 24 L11.5 41 L-11.5 41 Z" fill="#333333"/><rect x="-5" y="28" width="10" height="10" fill="#5a8ab0"/><path d="M-8 12 L8 12" stroke="#444" stroke-width="1.2"/><circle cx="-9" cy="6" r="4" fill="#111"/><circle cx="9" cy="6" r="4" fill="#111"/><ellipse cx="0" cy="15" rx="11.3" ry="9.8" fill="#fff"/><path d="M-10 10 Q-9 3 0 3.5 Q9 3 10 10 Q0 7 -10 10 Z" fill="#aaa"/><ellipse cx="-6.3" cy="17.5" rx="3.6" ry="2.2" fill="#f07c84" opacity="0.75"/><ellipse cx="6.3" cy="17.5" rx="3.6" ry="2.2" fill="#f07c84" opacity="0.75"/><path d="M-5.5 13 L-1.5 13.6 M1.5 13.6 L5.5 13" stroke="#333" stroke-width="1.2"/><path d="M-2.5 20 L2.5 20" stroke="#555" stroke-width="0.9"/></g></g></svg><div class="t" style="left:0;width:102.6px;text-align:center;top:100.5px;font-size:16.2px;color:#e8e8e8"></div></div>
<div class="a" style="left:0px;top:985px;width:549px;height:2px;background:#1b1b35;border-radius:0px;"></div></div>
</body></html>
